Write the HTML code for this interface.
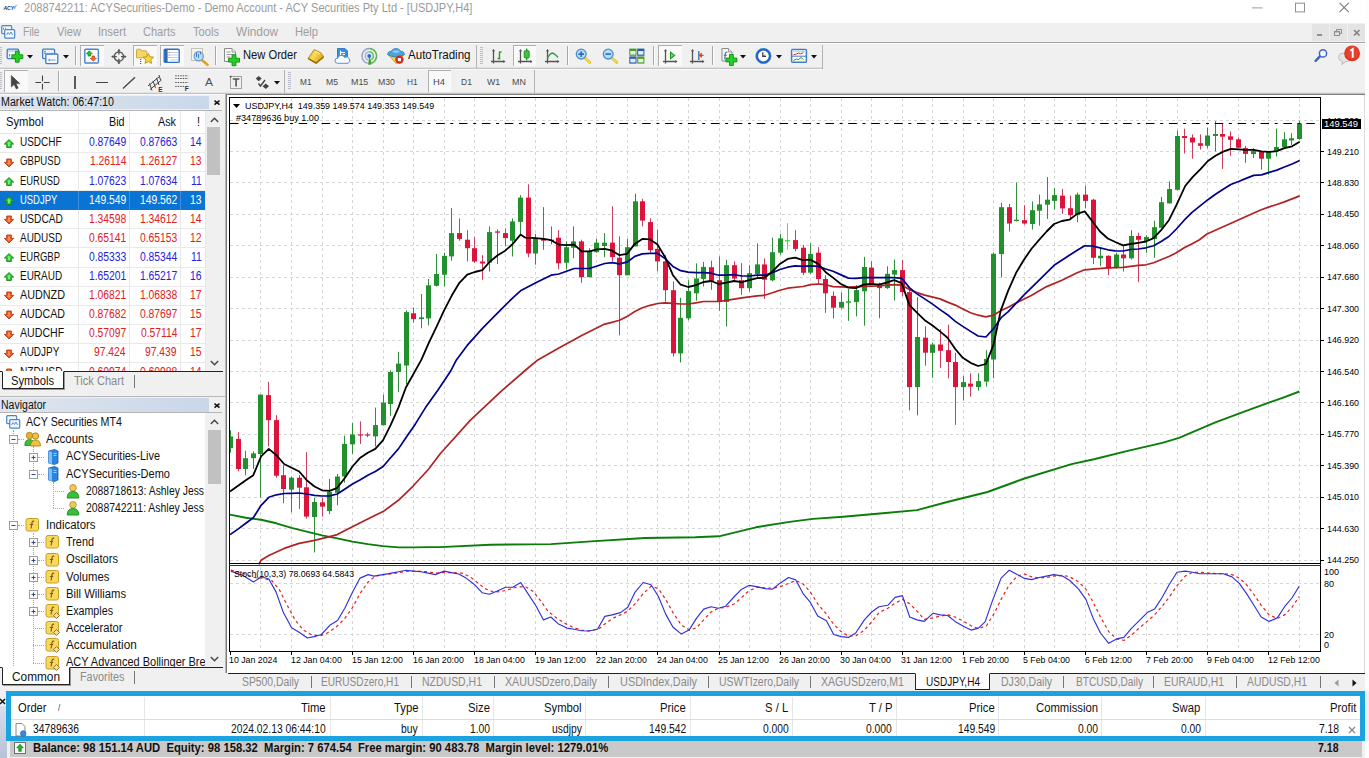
<!DOCTYPE html>
<html><head><meta charset="utf-8"><title>MT4</title>
<style>
html,body{margin:0;padding:0;}
body{width:1369px;height:758px;overflow:hidden;background:#f0f0f0;font-family:"Liberation Sans",sans-serif;position:relative;}
.t{position:absolute;white-space:pre;transform-origin:0 50%;}
.r{position:absolute;}
svg{position:absolute;overflow:visible;}
</style></head><body>
<div class="r" style="left:0px;top:0px;width:1369px;height:23px;background:#fff;"></div>
<span class="t" style="left:24.0px;top:0.8px;font-size:12.5px;line-height:15.0px;color:#9a9a9a;transform:scaleX(0.884);">2088742211: ACYSecurities-Demo - Demo Account - ACY Securities Pty Ltd - [USDJPY,H4]</span>
<svg style="left:1252px;top:0px" width="12" height="12"><path d="M0 7.900H10.500" stroke="#999" stroke-width="1"/></svg>
<svg style="left:1295px;top:0px" width="12" height="14"><rect x="0.500" y="3.200" width="9" height="8.700" stroke="#8f8f8f" stroke-width="1" fill="none"/></svg>
<svg style="left:1339px;top:0px" width="11" height="14"><path d="M0.500 2.900L9.800 12.200M9.800 2.900L0.500 12.200" stroke="#7c7c7c" stroke-width="1.100" fill="none"/></svg>
<div class="r" style="left:0px;top:23px;width:1369px;height:19px;background:#f0f0f0;"></div>
<span class="t" style="left:23.0px;top:24.5px;font-size:12.5px;line-height:15.0px;color:#9d9d9d;transform:scaleX(0.819);">File</span>
<span class="t" style="left:57.0px;top:24.5px;font-size:12.5px;line-height:15.0px;color:#9d9d9d;transform:scaleX(0.893);">View</span>
<span class="t" style="left:98.0px;top:24.5px;font-size:12.5px;line-height:15.0px;color:#9d9d9d;transform:scaleX(0.896);">Insert</span>
<span class="t" style="left:143.0px;top:24.5px;font-size:12.5px;line-height:15.0px;color:#9d9d9d;transform:scaleX(0.883);">Charts</span>
<span class="t" style="left:193.0px;top:24.5px;font-size:12.5px;line-height:15.0px;color:#9d9d9d;transform:scaleX(0.891);">Tools</span>
<span class="t" style="left:236.0px;top:24.5px;font-size:12.5px;line-height:15.0px;color:#9d9d9d;transform:scaleX(0.945);">Window</span>
<span class="t" style="left:295.0px;top:24.5px;font-size:12.5px;line-height:15.0px;color:#9d9d9d;transform:scaleX(0.895);">Help</span>
<div class="r" style="left:1312px;top:24px;width:17px;height:17px;background:#e4e4e4;"></div>
<div class="r" style="left:1330px;top:24px;width:17px;height:17px;background:#e4e4e4;"></div>
<div class="r" style="left:1348px;top:24px;width:17px;height:17px;background:#e4e4e4;"></div>
<div class="r" style="left:1317px;top:34px;width:5px;height:2px;background:#909090;"></div>
<svg style="left:1334px;top:29px" width="9" height="8"><path d="M2.5 2V0.5H7.5V4.5H6" stroke="#8c8c8c" stroke-width="1" fill="none"/><rect x="0.5" y="2.5" width="5" height="4" stroke="#8c8c8c" stroke-width="1" fill="none"/><path d="M0 2.700h6" stroke="#8c8c8c" stroke-width="1.400"/></svg>
<svg style="left:1353px;top:29px" width="8" height="8"><path d="M1 1L6.500 6.500M6.500 1L1 6.500" stroke="#808080" stroke-width="1.600" fill="none"/></svg>
<div class="r" style="left:0px;top:42px;width:1369px;height:1px;background:#a2a2a2;"></div>
<div class="r" style="left:0px;top:43px;width:1369px;height:1px;background:#fcfcfc;"></div>
<div class="r" style="left:0px;top:67px;width:822px;height:1px;background:#e2e2e2;"></div>
<div class="r" style="left:0px;top:68px;width:822px;height:1px;background:#c4c4c4;"></div>
<div class="r" style="left:0px;top:69px;width:822px;height:1px;background:#fafafa;"></div>
<div class="r" style="left:0px;top:92px;width:1369px;height:1px;background:#e4e4e4;"></div>
<div class="r" style="left:0px;top:93px;width:1369px;height:1px;background:#c2c2c2;"></div>
<div class="r" style="left:0px;top:94px;width:226px;height:1px;background:#f8f8f8;"></div>
<div class="r" style="left:0px;top:96px;width:209px;height:13px;background:linear-gradient(90deg,#dfe4ec,#c9d8ea);"></div>
<span class="t" style="left:1.0px;top:95.3px;font-size:12px;line-height:14.4px;color:#111;transform:scaleX(0.890);">Market Watch: 06:47:10</span>
<svg style="left:214px;top:100px" width="6" height="6"><path d="M0.500 0.700L5.500 4.700M5.500 0.700L0.500 4.700" stroke="#111" stroke-width="1.500" fill="none"/></svg>
<div class="r" style="left:0px;top:110px;width:223px;height:262px;background:#fff;"></div>
<div class="r" style="left:0px;top:110px;width:222px;height:1px;background:#b4b4b4;"></div>
<span class="t" style="left:6.0px;top:114.8px;font-size:12px;line-height:14.4px;color:#111;transform:scaleX(0.937);">Symbol</span>
<span class="t" style="left:108.9px;top:114.8px;font-size:12px;line-height:14.4px;color:#111;transform:scaleX(0.900);">Bid</span>
<span class="t" style="left:157.5px;top:114.8px;font-size:12px;line-height:14.4px;color:#111;transform:scaleX(0.900);">Ask</span>
<span class="t" style="left:197.0px;top:114.8px;font-size:12px;line-height:14.4px;color:#111;transform:scaleX(0.900);">!</span>
<div class="r" style="left:0px;top:133px;width:205px;height:1px;background:#e4e4e4;"></div>
<div class="r" style="left:78px;top:110px;width:1px;height:262px;background:#e8e8e8;"></div>
<div class="r" style="left:129px;top:110px;width:1px;height:262px;background:#e8e8e8;"></div>
<div class="r" style="left:180px;top:110px;width:1px;height:262px;background:#e8e8e8;"></div>
<div class="r" style="left:205px;top:110px;width:1px;height:262px;background:#e8e8e8;"></div>
<div class="r" style="left:0px;top:152px;width:205px;height:1px;background:#e9e9e9;"></div>
<svg style="left:4.2px;top:138.5px" width="11" height="10"><path d="M5 0.600L9.700 5.100H7.300V8.500H2.700V5.100H0.300Z" fill="#2cc42c" stroke="#1a8a1a" stroke-width="0.900" stroke-linejoin="round"/><path d="M5 2.500L7 4.600H6V7.300H4V4.600H3Z" fill="#7aea7a"/></svg>
<span class="t" style="left:19.8px;top:135.3px;font-size:12px;line-height:14.4px;color:#111;transform:scaleX(0.832);">USDCHF</span>
<span class="t" style="left:88.7px;top:135.3px;font-size:12px;line-height:14.4px;color:#2222dd;transform:scaleX(0.860);">0.87649</span>
<span class="t" style="left:139.7px;top:135.3px;font-size:12px;line-height:14.4px;color:#2222dd;transform:scaleX(0.860);">0.87663</span>
<span class="t" style="left:190.0px;top:135.3px;font-size:12px;line-height:14.4px;color:#2222dd;transform:scaleX(0.860);">14</span>
<div class="r" style="left:0px;top:171px;width:205px;height:1px;background:#e9e9e9;"></div>
<svg style="left:4.2px;top:157.6px" width="11" height="10"><path d="M5 8.900L9.700 4.400H7.300V1H2.700V4.400H0.300Z" fill="#ee5a22" stroke="#b83a10" stroke-width="0.900" stroke-linejoin="round"/><path d="M5 7L7 4.900H6V2.200H4V4.900H3Z" fill="#ff8a5a"/></svg>
<span class="t" style="left:19.8px;top:154.4px;font-size:12px;line-height:14.4px;color:#111;transform:scaleX(0.801);">GBPUSD</span>
<span class="t" style="left:89.5px;top:154.4px;font-size:12px;line-height:14.4px;color:#e02020;transform:scaleX(0.860);">1.26114</span>
<span class="t" style="left:139.7px;top:154.4px;font-size:12px;line-height:14.4px;color:#e02020;transform:scaleX(0.860);">1.26127</span>
<span class="t" style="left:190.0px;top:154.4px;font-size:12px;line-height:14.4px;color:#e02020;transform:scaleX(0.860);">13</span>
<div class="r" style="left:0px;top:190px;width:205px;height:1px;background:#e9e9e9;"></div>
<svg style="left:4.2px;top:176.7px" width="11" height="10"><path d="M5 0.600L9.700 5.100H7.300V8.500H2.700V5.100H0.300Z" fill="#2cc42c" stroke="#1a8a1a" stroke-width="0.900" stroke-linejoin="round"/><path d="M5 2.500L7 4.600H6V7.300H4V4.600H3Z" fill="#7aea7a"/></svg>
<span class="t" style="left:19.8px;top:173.5px;font-size:12px;line-height:14.4px;color:#111;transform:scaleX(0.785);">EURUSD</span>
<span class="t" style="left:88.7px;top:173.5px;font-size:12px;line-height:14.4px;color:#2222dd;transform:scaleX(0.860);">1.07623</span>
<span class="t" style="left:139.7px;top:173.5px;font-size:12px;line-height:14.4px;color:#2222dd;transform:scaleX(0.860);">1.07634</span>
<span class="t" style="left:190.8px;top:173.5px;font-size:12px;line-height:14.4px;color:#2222dd;transform:scaleX(0.860);">11</span>
<div class="r" style="left:0px;top:191px;width:205px;height:19px;background:#0a74d4;"></div>
<div class="r" style="left:78px;top:191px;width:1px;height:19px;background:#3c8fdd;"></div>
<div class="r" style="left:129px;top:191px;width:1px;height:19px;background:#3c8fdd;"></div>
<div class="r" style="left:180px;top:191px;width:1px;height:19px;background:#3c8fdd;"></div>
<svg style="left:4.2px;top:195.8px" width="11" height="10"><path d="M5 0.600L9.700 5.100H7.300V8.500H2.700V5.100H0.300Z" fill="#2cc42c" stroke="#1a8a1a" stroke-width="0.900" stroke-linejoin="round"/><path d="M5 2.500L7 4.600H6V7.300H4V4.600H3Z" fill="#7aea7a"/></svg>
<span class="t" style="left:19.8px;top:192.6px;font-size:12px;line-height:14.4px;color:#fff;transform:scaleX(0.786);">USDJPY</span>
<span class="t" style="left:88.7px;top:192.6px;font-size:12px;line-height:14.4px;color:#fff;transform:scaleX(0.860);">149.549</span>
<span class="t" style="left:139.7px;top:192.6px;font-size:12px;line-height:14.4px;color:#fff;transform:scaleX(0.860);">149.562</span>
<span class="t" style="left:190.0px;top:192.6px;font-size:12px;line-height:14.4px;color:#fff;transform:scaleX(0.860);">13</span>
<div class="r" style="left:0px;top:228px;width:205px;height:1px;background:#e9e9e9;"></div>
<svg style="left:4.2px;top:214.9px" width="11" height="10"><path d="M5 8.900L9.700 4.400H7.300V1H2.700V4.400H0.300Z" fill="#ee5a22" stroke="#b83a10" stroke-width="0.900" stroke-linejoin="round"/><path d="M5 7L7 4.900H6V2.200H4V4.900H3Z" fill="#ff8a5a"/></svg>
<span class="t" style="left:19.8px;top:211.7px;font-size:12px;line-height:14.4px;color:#111;transform:scaleX(0.847);">USDCAD</span>
<span class="t" style="left:88.7px;top:211.7px;font-size:12px;line-height:14.4px;color:#e02020;transform:scaleX(0.860);">1.34598</span>
<span class="t" style="left:139.7px;top:211.7px;font-size:12px;line-height:14.4px;color:#e02020;transform:scaleX(0.860);">1.34612</span>
<span class="t" style="left:190.0px;top:211.7px;font-size:12px;line-height:14.4px;color:#e02020;transform:scaleX(0.860);">14</span>
<div class="r" style="left:0px;top:247px;width:205px;height:1px;background:#e9e9e9;"></div>
<svg style="left:4.2px;top:234.0px" width="11" height="10"><path d="M5 8.900L9.700 4.400H7.300V1H2.700V4.400H0.300Z" fill="#ee5a22" stroke="#b83a10" stroke-width="0.900" stroke-linejoin="round"/><path d="M5 7L7 4.900H6V2.200H4V4.900H3Z" fill="#ff8a5a"/></svg>
<span class="t" style="left:19.8px;top:230.8px;font-size:12px;line-height:14.4px;color:#111;transform:scaleX(0.831);">AUDUSD</span>
<span class="t" style="left:88.7px;top:230.8px;font-size:12px;line-height:14.4px;color:#e02020;transform:scaleX(0.860);">0.65141</span>
<span class="t" style="left:139.7px;top:230.8px;font-size:12px;line-height:14.4px;color:#e02020;transform:scaleX(0.860);">0.65153</span>
<span class="t" style="left:190.0px;top:230.8px;font-size:12px;line-height:14.4px;color:#e02020;transform:scaleX(0.860);">12</span>
<div class="r" style="left:0px;top:267px;width:205px;height:1px;background:#e9e9e9;"></div>
<svg style="left:4.2px;top:253.1px" width="11" height="10"><path d="M5 0.600L9.700 5.100H7.300V8.500H2.700V5.100H0.300Z" fill="#2cc42c" stroke="#1a8a1a" stroke-width="0.900" stroke-linejoin="round"/><path d="M5 2.500L7 4.600H6V7.300H4V4.600H3Z" fill="#7aea7a"/></svg>
<span class="t" style="left:19.8px;top:249.9px;font-size:12px;line-height:14.4px;color:#111;transform:scaleX(0.789);">EURGBP</span>
<span class="t" style="left:88.7px;top:249.9px;font-size:12px;line-height:14.4px;color:#2222dd;transform:scaleX(0.860);">0.85333</span>
<span class="t" style="left:139.7px;top:249.9px;font-size:12px;line-height:14.4px;color:#2222dd;transform:scaleX(0.860);">0.85344</span>
<span class="t" style="left:190.8px;top:249.9px;font-size:12px;line-height:14.4px;color:#2222dd;transform:scaleX(0.860);">11</span>
<div class="r" style="left:0px;top:286px;width:205px;height:1px;background:#e9e9e9;"></div>
<svg style="left:4.2px;top:272.2px" width="11" height="10"><path d="M5 0.600L9.700 5.100H7.300V8.500H2.700V5.100H0.300Z" fill="#2cc42c" stroke="#1a8a1a" stroke-width="0.900" stroke-linejoin="round"/><path d="M5 2.500L7 4.600H6V7.300H4V4.600H3Z" fill="#7aea7a"/></svg>
<span class="t" style="left:19.8px;top:269.0px;font-size:12px;line-height:14.4px;color:#111;transform:scaleX(0.831);">EURAUD</span>
<span class="t" style="left:88.7px;top:269.0px;font-size:12px;line-height:14.4px;color:#2222dd;transform:scaleX(0.860);">1.65201</span>
<span class="t" style="left:139.7px;top:269.0px;font-size:12px;line-height:14.4px;color:#2222dd;transform:scaleX(0.860);">1.65217</span>
<span class="t" style="left:190.0px;top:269.0px;font-size:12px;line-height:14.4px;color:#2222dd;transform:scaleX(0.860);">16</span>
<div class="r" style="left:0px;top:305px;width:205px;height:1px;background:#e9e9e9;"></div>
<svg style="left:4.2px;top:291.3px" width="11" height="10"><path d="M5 8.900L9.700 4.400H7.300V1H2.700V4.400H0.300Z" fill="#ee5a22" stroke="#b83a10" stroke-width="0.900" stroke-linejoin="round"/><path d="M5 7L7 4.900H6V2.200H4V4.900H3Z" fill="#ff8a5a"/></svg>
<span class="t" style="left:19.8px;top:288.1px;font-size:12px;line-height:14.4px;color:#111;transform:scaleX(0.900);">AUDNZD</span>
<span class="t" style="left:88.7px;top:288.1px;font-size:12px;line-height:14.4px;color:#e02020;transform:scaleX(0.860);">1.06821</span>
<span class="t" style="left:139.7px;top:288.1px;font-size:12px;line-height:14.4px;color:#e02020;transform:scaleX(0.860);">1.06838</span>
<span class="t" style="left:190.0px;top:288.1px;font-size:12px;line-height:14.4px;color:#e02020;transform:scaleX(0.860);">17</span>
<div class="r" style="left:0px;top:324px;width:205px;height:1px;background:#e9e9e9;"></div>
<svg style="left:4.2px;top:310.4px" width="11" height="10"><path d="M5 8.900L9.700 4.400H7.300V1H2.700V4.400H0.300Z" fill="#ee5a22" stroke="#b83a10" stroke-width="0.900" stroke-linejoin="round"/><path d="M5 7L7 4.900H6V2.200H4V4.900H3Z" fill="#ff8a5a"/></svg>
<span class="t" style="left:19.8px;top:307.2px;font-size:12px;line-height:14.4px;color:#111;transform:scaleX(0.888);">AUDCAD</span>
<span class="t" style="left:88.7px;top:307.2px;font-size:12px;line-height:14.4px;color:#e02020;transform:scaleX(0.860);">0.87682</span>
<span class="t" style="left:139.7px;top:307.2px;font-size:12px;line-height:14.4px;color:#e02020;transform:scaleX(0.860);">0.87697</span>
<span class="t" style="left:190.0px;top:307.2px;font-size:12px;line-height:14.4px;color:#e02020;transform:scaleX(0.860);">15</span>
<div class="r" style="left:0px;top:343px;width:205px;height:1px;background:#e9e9e9;"></div>
<svg style="left:4.2px;top:329.5px" width="11" height="10"><path d="M5 8.900L9.700 4.400H7.300V1H2.700V4.400H0.300Z" fill="#ee5a22" stroke="#b83a10" stroke-width="0.900" stroke-linejoin="round"/><path d="M5 7L7 4.900H6V2.200H4V4.900H3Z" fill="#ff8a5a"/></svg>
<span class="t" style="left:19.8px;top:326.3px;font-size:12px;line-height:14.4px;color:#111;transform:scaleX(0.884);">AUDCHF</span>
<span class="t" style="left:88.7px;top:326.3px;font-size:12px;line-height:14.4px;color:#e02020;transform:scaleX(0.860);">0.57097</span>
<span class="t" style="left:140.5px;top:326.3px;font-size:12px;line-height:14.4px;color:#e02020;transform:scaleX(0.860);">0.57114</span>
<span class="t" style="left:190.0px;top:326.3px;font-size:12px;line-height:14.4px;color:#e02020;transform:scaleX(0.860);">17</span>
<div class="r" style="left:0px;top:362px;width:205px;height:1px;background:#e9e9e9;"></div>
<svg style="left:4.2px;top:348.6px" width="11" height="10"><path d="M5 8.900L9.700 4.400H7.300V1H2.700V4.400H0.300Z" fill="#ee5a22" stroke="#b83a10" stroke-width="0.900" stroke-linejoin="round"/><path d="M5 7L7 4.900H6V2.200H4V4.900H3Z" fill="#ff8a5a"/></svg>
<span class="t" style="left:19.8px;top:345.4px;font-size:12px;line-height:14.4px;color:#111;transform:scaleX(0.830);">AUDJPY</span>
<span class="t" style="left:94.4px;top:345.4px;font-size:12px;line-height:14.4px;color:#e02020;transform:scaleX(0.860);">97.424</span>
<span class="t" style="left:145.4px;top:345.4px;font-size:12px;line-height:14.4px;color:#e02020;transform:scaleX(0.860);">97.439</span>
<span class="t" style="left:190.0px;top:345.4px;font-size:12px;line-height:14.4px;color:#e02020;transform:scaleX(0.860);">15</span>
<div class="r" style="left:0px;top:381px;width:205px;height:1px;background:#e9e9e9;"></div>
<svg style="left:4.2px;top:367.7px" width="11" height="10"><path d="M5 8.900L9.700 4.400H7.300V1H2.700V4.400H0.300Z" fill="#ee5a22" stroke="#b83a10" stroke-width="0.900" stroke-linejoin="round"/><path d="M5 7L7 4.900H6V2.200H4V4.900H3Z" fill="#ff8a5a"/></svg>
<span class="t" style="left:19.8px;top:364.5px;font-size:12px;line-height:14.4px;color:#111;transform:scaleX(0.850);">NZDUSD</span>
<span class="t" style="left:88.7px;top:364.5px;font-size:12px;line-height:14.4px;color:#e02020;transform:scaleX(0.860);">0.60974</span>
<span class="t" style="left:139.7px;top:364.5px;font-size:12px;line-height:14.4px;color:#e02020;transform:scaleX(0.860);">0.60988</span>
<span class="t" style="left:190.0px;top:364.5px;font-size:12px;line-height:14.4px;color:#e02020;transform:scaleX(0.860);">14</span>
<div class="r" style="left:0px;top:371px;width:223px;height:25px;background:#f0f0f0;"></div>
<div class="r" style="left:206px;top:110px;width:17px;height:262px;background:#f0f0f0;"></div>
<div class="r" style="left:207px;top:127px;width:13px;height:48px;background:#c1c1c1;"></div>
<div class="r" style="left:0px;top:110px;width:222px;height:1px;background:#b4b4b4;"></div>
<svg style="left:210px;top:117px" width="9" height="6"><path d="M0.8 5L4.5 1.3L8.2 5" stroke="#444" stroke-width="1.4" fill="none"/></svg>
<svg style="left:210px;top:360px" width="9" height="6"><path d="M0.8 1L4.5 4.7L8.2 1" stroke="#444" stroke-width="1.4" fill="none"/></svg>
<div class="r" style="left:0px;top:371px;width:223px;height:1px;background:#222;"></div>
<div class="r" style="left:2px;top:371px;width:62px;height:18px;background:#fff;border:1px solid #222;border-top:1px solid #fff;box-sizing:border-box;box-shadow:1px 1px 0 #999;"></div>
<span class="t" style="left:11.0px;top:373.5px;font-size:12px;line-height:14.4px;color:#111;transform:scaleX(0.935);">Symbols</span>
<span class="t" style="left:74.0px;top:373.5px;font-size:12px;line-height:14.4px;color:#8a8a8a;transform:scaleX(0.922);">Tick Chart</span>
<div class="r" style="left:134px;top:375px;width:1px;height:13px;background:#777;"></div>
<div class="r" style="left:0px;top:396px;width:225px;height:1px;background:#b8b8b8;"></div>
<div class="r" style="left:0px;top:398px;width:209px;height:14px;background:linear-gradient(90deg,#e0e5ee,#c9d7e9);"></div>
<div class="r" style="left:0px;top:412px;width:222px;height:1px;background:#b4b4b4;"></div>
<span class="t" style="left:1.0px;top:397.8px;font-size:12px;line-height:14.4px;color:#111;transform:scaleX(0.876);">Navigator</span>
<svg style="left:214px;top:403px" width="6" height="6"><path d="M0.500 0.700L5.500 4.700M5.500 0.700L0.500 4.700" stroke="#111" stroke-width="1.500" fill="none"/></svg>
<div class="r" style="left:0px;top:413px;width:223px;height:256px;background:#fff;"></div>
<span class="t" style="left:26.3px;top:415.0px;font-size:12px;line-height:14.4px;color:#111;transform:scaleX(0.890);">ACY Securities MT4</span>
<span class="t" style="left:46.3px;top:432.2px;font-size:12px;line-height:14.4px;color:#111;transform:scaleX(0.962);">Accounts</span>
<span class="t" style="left:66.3px;top:449.3px;font-size:12px;line-height:14.4px;color:#111;transform:scaleX(0.909);">ACYSecurities-Live</span>
<span class="t" style="left:66.3px;top:466.5px;font-size:12px;line-height:14.4px;color:#111;transform:scaleX(0.917);">ACYSecurities-Demo</span>
<span class="t" style="left:86.3px;top:483.7px;font-size:12px;line-height:14.4px;color:#111;transform:scaleX(0.863);">2088718613: Ashley Jess</span>
<span class="t" style="left:86.3px;top:500.9px;font-size:12px;line-height:14.4px;color:#111;transform:scaleX(0.868);">2088742211: Ashley Jess</span>
<span class="t" style="left:46.3px;top:518.0px;font-size:12px;line-height:14.4px;color:#111;transform:scaleX(0.952);">Indicators</span>
<span class="t" style="left:66.3px;top:535.2px;font-size:12px;line-height:14.4px;color:#111;transform:scaleX(0.906);">Trend</span>
<span class="t" style="left:66.3px;top:552.4px;font-size:12px;line-height:14.4px;color:#111;transform:scaleX(0.928);">Oscillators</span>
<span class="t" style="left:66.3px;top:569.5px;font-size:12px;line-height:14.4px;color:#111;transform:scaleX(0.943);">Volumes</span>
<span class="t" style="left:66.3px;top:586.7px;font-size:12px;line-height:14.4px;color:#111;transform:scaleX(0.938);">Bill Williams</span>
<span class="t" style="left:66.3px;top:603.9px;font-size:12px;line-height:14.4px;color:#111;transform:scaleX(0.892);">Examples</span>
<span class="t" style="left:66.3px;top:621.0px;font-size:12px;line-height:14.4px;color:#111;transform:scaleX(0.931);">Accelerator</span>
<span class="t" style="left:66.3px;top:638.2px;font-size:12px;line-height:14.4px;color:#111;transform:scaleX(0.983);">Accumulation</span>
<span class="t" style="left:66.3px;top:655.4px;font-size:12px;line-height:14.4px;color:#111;transform:scaleX(0.915);">ACY Advanced Bollinger Bre</span>
<div class="r" style="left:13px;top:430px;width:1px;height:235.58000000000004px;background:transparent;border-left:1px dotted #a6a6a6;"></div>
<div class="r" style="left:18px;top:439px;width:6px;height:1px;background:transparent;border-top:1px dotted #a6a6a6;"></div>
<div class="r" style="left:18px;top:525px;width:6px;height:1px;background:transparent;border-top:1px dotted #a6a6a6;"></div>
<div class="r" style="left:33px;top:446px;width:1px;height:24px;background:transparent;border-left:1px dotted #a6a6a6;"></div>
<div class="r" style="left:38px;top:457px;width:6px;height:1px;background:transparent;border-top:1px dotted #a6a6a6;"></div>
<div class="r" style="left:38px;top:474px;width:6px;height:1px;background:transparent;border-top:1px dotted #a6a6a6;"></div>
<div class="r" style="left:53px;top:482px;width:1px;height:26px;background:transparent;border-left:1px dotted #a6a6a6;"></div>
<div class="r" style="left:53px;top:491px;width:11px;height:1px;background:transparent;border-top:1px dotted #a6a6a6;"></div>
<div class="r" style="left:53px;top:508px;width:11px;height:1px;background:transparent;border-top:1px dotted #a6a6a6;"></div>
<div class="r" style="left:33px;top:533px;width:1px;height:130px;background:transparent;border-left:1px dotted #a6a6a6;"></div>
<div class="r" style="left:38px;top:542px;width:6px;height:1px;background:transparent;border-top:1px dotted #a6a6a6;"></div>
<div class="r" style="left:38px;top:560px;width:6px;height:1px;background:transparent;border-top:1px dotted #a6a6a6;"></div>
<div class="r" style="left:38px;top:577px;width:6px;height:1px;background:transparent;border-top:1px dotted #a6a6a6;"></div>
<div class="r" style="left:38px;top:594px;width:6px;height:1px;background:transparent;border-top:1px dotted #a6a6a6;"></div>
<div class="r" style="left:38px;top:611px;width:6px;height:1px;background:transparent;border-top:1px dotted #a6a6a6;"></div>
<div class="r" style="left:33px;top:628px;width:11px;height:1px;background:transparent;border-top:1px dotted #a6a6a6;"></div>
<div class="r" style="left:33px;top:645px;width:11px;height:1px;background:transparent;border-top:1px dotted #a6a6a6;"></div>
<div class="r" style="left:33px;top:663px;width:11px;height:1px;background:transparent;border-top:1px dotted #a6a6a6;"></div>
<div class="r" style="left:0px;top:667px;width:223px;height:26px;background:#f0f0f0;"></div>
<div class="r" style="left:0px;top:667px;width:223px;height:1px;background:#222;"></div>
<div class="r" style="left:2px;top:667px;width:68px;height:18px;background:#fff;border:1px solid #222;border-top:1px solid #fff;box-sizing:border-box;box-shadow:1px 1px 0 #999;"></div>
<span class="t" style="left:12.0px;top:669.6px;font-size:12px;line-height:14.4px;color:#111;transform:scaleX(0.986);">Common</span>
<span class="t" style="left:79.5px;top:669.6px;font-size:12px;line-height:14.4px;color:#8a8a8a;transform:scaleX(0.902);">Favorites</span>
<div class="r" style="left:134px;top:671px;width:1px;height:13px;background:#777;"></div>
<div class="r" style="left:205px;top:413px;width:18px;height:254px;background:#f0f0f0;"></div>
<div class="r" style="left:208px;top:430px;width:13px;height:54px;background:#c1c1c1;"></div>
<svg style="left:210px;top:419px" width="9" height="6"><path d="M0.800 5L4.500 1.300L8.200 5" stroke="#444" stroke-width="1.400" fill="none"/></svg>
<svg style="left:210px;top:656px" width="9" height="6"><path d="M0.800 1L4.500 4.700L8.200 1" stroke="#444" stroke-width="1.400" fill="none"/></svg>
<div class="r" style="left:0px;top:706px;width:7px;height:52px;background:linear-gradient(180deg,#d8dfea,#b6c2d8);"></div>
<div class="r" style="left:9px;top:695px;width:1353px;height:43px;background:#fff;"></div>
<span class="t" style="left:17.5px;top:701.1px;font-size:12px;line-height:14.4px;color:#111;transform:scaleX(0.930);">Order</span>
<span class="t" style="left:300.9px;top:701.1px;font-size:12px;line-height:14.4px;color:#111;transform:scaleX(0.940);">Time</span>
<span class="t" style="left:394.0px;top:701.1px;font-size:12px;line-height:14.4px;color:#111;transform:scaleX(0.940);">Type</span>
<span class="t" style="left:467.6px;top:701.1px;font-size:12px;line-height:14.4px;color:#111;transform:scaleX(0.940);">Size</span>
<span class="t" style="left:543.9px;top:701.1px;font-size:12px;line-height:14.4px;color:#111;transform:scaleX(0.940);">Symbol</span>
<span class="t" style="left:659.8px;top:701.1px;font-size:12px;line-height:14.4px;color:#111;transform:scaleX(0.940);">Price</span>
<span class="t" style="left:765.3px;top:701.1px;font-size:12px;line-height:14.4px;color:#111;transform:scaleX(0.940);">S / L</span>
<span class="t" style="left:868.9px;top:701.1px;font-size:12px;line-height:14.4px;color:#111;transform:scaleX(0.940);">T / P</span>
<span class="t" style="left:968.8px;top:701.1px;font-size:12px;line-height:14.4px;color:#111;transform:scaleX(0.940);">Price</span>
<span class="t" style="left:1035.5px;top:701.1px;font-size:12px;line-height:14.4px;color:#111;transform:scaleX(0.940);">Commission</span>
<span class="t" style="left:1172.3px;top:701.1px;font-size:12px;line-height:14.4px;color:#111;transform:scaleX(0.940);">Swap</span>
<span class="t" style="left:1330.2px;top:701.1px;font-size:12px;line-height:14.4px;color:#111;transform:scaleX(0.940);">Profit</span>
<span class="t" style="left:57.5px;top:703.1px;font-size:9px;line-height:10.8px;color:#444;transform:scaleX(0.900);">/</span>
<div class="r" style="left:144px;top:697px;width:1px;height:40px;background:#e6e6e6;"></div>
<div class="r" style="left:330px;top:697px;width:1px;height:40px;background:#e6e6e6;"></div>
<div class="r" style="left:422px;top:697px;width:1px;height:40px;background:#e6e6e6;"></div>
<div class="r" style="left:493px;top:697px;width:1px;height:40px;background:#e6e6e6;"></div>
<div class="r" style="left:585px;top:697px;width:1px;height:40px;background:#e6e6e6;"></div>
<div class="r" style="left:690px;top:697px;width:1px;height:40px;background:#e6e6e6;"></div>
<div class="r" style="left:792px;top:697px;width:1px;height:40px;background:#e6e6e6;"></div>
<div class="r" style="left:896px;top:697px;width:1px;height:40px;background:#e6e6e6;"></div>
<div class="r" style="left:998px;top:697px;width:1px;height:40px;background:#e6e6e6;"></div>
<div class="r" style="left:1101px;top:697px;width:1px;height:40px;background:#e6e6e6;"></div>
<div class="r" style="left:1205px;top:697px;width:1px;height:40px;background:#e6e6e6;"></div>
<div class="r" style="left:9px;top:719px;width:1353px;height:1px;background:#dcdcdc;"></div>
<span class="t" style="left:32.7px;top:722.1px;font-size:12px;line-height:14.4px;color:#111;transform:scaleX(0.860);">34789636</span>
<span class="t" style="left:231.3px;top:722.1px;font-size:12px;line-height:14.4px;color:#111;transform:scaleX(0.860);">2024.02.13 06:44:10</span>
<span class="t" style="left:401.4px;top:722.1px;font-size:12px;line-height:14.4px;color:#111;transform:scaleX(0.860);">buy</span>
<span class="t" style="left:469.9px;top:722.1px;font-size:12px;line-height:14.4px;color:#111;transform:scaleX(0.860);">1.00</span>
<span class="t" style="left:552.2px;top:722.1px;font-size:12px;line-height:14.4px;color:#111;transform:scaleX(0.860);">usdjpy</span>
<span class="t" style="left:648.7px;top:722.1px;font-size:12px;line-height:14.4px;color:#111;transform:scaleX(0.860);">149.542</span>
<span class="t" style="left:763.2px;top:722.1px;font-size:12px;line-height:14.4px;color:#111;transform:scaleX(0.860);">0.000</span>
<span class="t" style="left:866.2px;top:722.1px;font-size:12px;line-height:14.4px;color:#111;transform:scaleX(0.860);">0.000</span>
<span class="t" style="left:957.7px;top:722.1px;font-size:12px;line-height:14.4px;color:#111;transform:scaleX(0.860);">149.549</span>
<span class="t" style="left:1077.9px;top:722.1px;font-size:12px;line-height:14.4px;color:#111;transform:scaleX(0.860);">0.00</span>
<span class="t" style="left:1180.9px;top:722.1px;font-size:12px;line-height:14.4px;color:#111;transform:scaleX(0.860);">0.00</span>
<span class="t" style="left:1318.9px;top:722.1px;font-size:12px;line-height:14.4px;color:#111;transform:scaleX(0.860);">7.18</span>
<svg style="left:1348px;top:726px" width="8" height="8"><path d="M1 1L7 7M7 1L1 7" stroke="#888" stroke-width="1.300" fill="none"/></svg>
<div class="r" style="left:10px;top:741px;width:1352px;height:16px;background:#c9c9c9;"></div>
<span class="t" style="left:32.7px;top:741.3px;font-size:12px;line-height:14.4px;color:#111;transform:scaleX(0.938);font-weight:bold;">Balance: 98 151.14 AUD  Equity: 98 158.32  Margin: 7 674.54  Free margin: 90 483.78  Margin level: 1279.01%</span>
<span class="t" style="left:1318.4px;top:741.3px;font-size:12px;line-height:14.4px;color:#111;transform:scaleX(0.880);font-weight:bold;">7.18</span>
<div class="r" style="left:6px;top:691px;width:1359px;height:50px;background:transparent;border:5px solid #1ba2e1;border-top-width:5.500px;box-sizing:border-box;"></div>
<svg style="left:0px;top:698px" width="6" height="7"><path d="M0 1L5 6M5 1L0 6" stroke="#111" stroke-width="1.500" fill="none"/></svg>
<div class="r" style="left:226px;top:94px;width:1139px;height:579px;background:#fff;"></div>
<div class="r" style="left:226px;top:94px;width:1139px;height:1px;background:#7e7e7e;"></div>
<div class="r" style="left:225px;top:94px;width:1px;height:597px;background:#b8b8b8;"></div>
<div class="r" style="left:226px;top:94px;width:1px;height:597px;background:#7a7a7a;"></div>
<div class="r" style="left:1364px;top:95px;width:1px;height:578px;background:#dcdcdc;"></div>
<svg style="left:0;top:0" width="1369" height="758" viewBox="0 0 1369 758">
<path d="M260.5 98V563 M260.5 567V651 M291.5 98V563 M291.5 567V651 M322.5 98V563 M322.5 567V651 M352.5 98V563 M352.5 567V651 M383.5 98V563 M383.5 567V651 M413.5 98V563 M413.5 567V651 M444.5 98V563 M444.5 567V651 M474.5 98V563 M474.5 567V651 M505.5 98V563 M505.5 567V651 M535.5 98V563 M535.5 567V651 M566.5 98V563 M566.5 567V651 M596.5 98V563 M596.5 567V651 M627.5 98V563 M627.5 567V651 M657.5 98V563 M657.5 567V651 M688.5 98V563 M688.5 567V651 M719.5 98V563 M719.5 567V651 M749.5 98V563 M749.5 567V651 M780.5 98V563 M780.5 567V651 M810.5 98V563 M810.5 567V651 M841.5 98V563 M841.5 567V651 M871.5 98V563 M871.5 567V651 M902.5 98V563 M902.5 567V651 M932.5 98V563 M932.5 567V651 M963.5 98V563 M963.5 567V651 M993.5 98V563 M993.5 567V651 M1024.5 98V563 M1024.5 567V651 M1054.5 98V563 M1054.5 567V651 M1085.5 98V563 M1085.5 567V651 M1116.5 98V563 M1116.5 567V651 M1146.5 98V563 M1146.5 567V651 M1177.5 98V563 M1177.5 567V651 M1207.5 98V563 M1207.5 567V651 M1238.5 98V563 M1238.5 567V651 M1268.5 98V563 M1268.5 567V651 M1299.5 98V563 M1299.5 567V651 M230 120.5H1320 M230 151.5H1320 M230 182.5H1320 M230 214.5H1320 M230 245.5H1320 M230 277.5H1320 M230 308.5H1320 M230 340.5H1320 M230 371.5H1320 M230 402.5H1320 M230 434.5H1320 M230 465.5H1320 M230 497.5H1320 M230 528.5H1320 M230 560.5H1320 M230 583.5H1320 M230 634.5H1320" stroke="#d6d6d6" stroke-width="1" stroke-dasharray="3 3" fill="none" shape-rendering="crispEdges"/>
<rect x="230" y="430.1" width="1" height="22.6" fill="#2f8f38"/>
<rect x="230" y="436.4" width="3" height="11.8" fill="#22902c"/>
<rect x="238" y="432.1" width="1" height="39.3" fill="#cc3c5c"/>
<rect x="236" y="438.9" width="5" height="30.1" fill="#dc143c"/>
<rect x="245" y="450.7" width="1" height="24.6" fill="#2f8f38"/>
<rect x="243" y="458.2" width="5" height="10.8" fill="#22902c"/>
<rect x="253" y="451.4" width="1" height="17.5" fill="#2f8f38"/>
<rect x="251" y="453.4" width="5" height="4.8" fill="#22902c"/>
<rect x="260" y="394.6" width="1" height="103.2" fill="#2f8f38"/>
<rect x="258" y="394.6" width="5" height="59.4" fill="#22902c"/>
<rect x="268" y="381.8" width="1" height="64.6" fill="#cc3c5c"/>
<rect x="266" y="395.1" width="5" height="25.1" fill="#dc143c"/>
<rect x="276" y="415.1" width="1" height="62.6" fill="#cc3c5c"/>
<rect x="274" y="420.1" width="5" height="55.6" fill="#dc143c"/>
<rect x="283" y="465.2" width="1" height="38.1" fill="#cc3c5c"/>
<rect x="281" y="475.2" width="5" height="13.8" fill="#dc143c"/>
<rect x="291" y="476.5" width="1" height="35.8" fill="#2f8f38"/>
<rect x="289" y="477.7" width="5" height="12.0" fill="#22902c"/>
<rect x="299" y="475.2" width="1" height="33.8" fill="#cc3c5c"/>
<rect x="297" y="477.7" width="5" height="10.0" fill="#dc143c"/>
<rect x="306" y="452.2" width="1" height="66.4" fill="#cc3c5c"/>
<rect x="304" y="487.3" width="5" height="29.3" fill="#dc143c"/>
<rect x="314" y="497.8" width="1" height="54.6" fill="#2f8f38"/>
<rect x="312" y="502.0" width="5" height="15.0" fill="#22902c"/>
<rect x="322" y="497.8" width="1" height="18.8" fill="#cc3c5c"/>
<rect x="320" y="502.3" width="5" height="4.3" fill="#dc143c"/>
<rect x="329" y="479.0" width="1" height="35.1" fill="#2f8f38"/>
<rect x="327" y="492.0" width="5" height="19.0" fill="#22902c"/>
<rect x="337" y="474.0" width="1" height="31.3" fill="#2f8f38"/>
<rect x="335" y="476.5" width="5" height="16.3" fill="#22902c"/>
<rect x="344" y="435.6" width="1" height="47.1" fill="#2f8f38"/>
<rect x="342" y="443.9" width="5" height="32.6" fill="#22902c"/>
<rect x="352" y="423.1" width="1" height="30.8" fill="#2f8f38"/>
<rect x="350" y="434.4" width="5" height="10.0" fill="#22902c"/>
<rect x="360" y="421.4" width="1" height="22.6" fill="#cc3c5c"/>
<rect x="358" y="434.4" width="5" height="1.2" fill="#dc143c"/>
<rect x="367" y="432.6" width="1" height="4.5" fill="#cc3c5c"/>
<rect x="365" y="434.4" width="5" height="1.2" fill="#dc143c"/>
<rect x="375" y="407.6" width="1" height="38.8" fill="#2f8f38"/>
<rect x="373" y="425.1" width="5" height="11.3" fill="#22902c"/>
<rect x="383" y="394.6" width="1" height="31.1" fill="#2f8f38"/>
<rect x="381" y="402.6" width="5" height="22.6" fill="#22902c"/>
<rect x="390" y="370.3" width="1" height="45.4" fill="#2f8f38"/>
<rect x="388" y="372.0" width="5" height="32.0" fill="#22902c"/>
<rect x="398" y="351.8" width="1" height="40.4" fill="#2f8f38"/>
<rect x="396" y="363.6" width="5" height="8.4" fill="#22902c"/>
<rect x="406" y="310.3" width="1" height="73.9" fill="#2f8f38"/>
<rect x="404" y="312.1" width="5" height="53.4" fill="#22902c"/>
<rect x="413" y="307.3" width="1" height="15.5" fill="#cc3c5c"/>
<rect x="411" y="313.3" width="5" height="5.8" fill="#dc143c"/>
<rect x="421" y="294.0" width="1" height="34.3" fill="#2f8f38"/>
<rect x="419" y="317.3" width="5" height="1.8" fill="#22902c"/>
<rect x="428" y="279.0" width="1" height="46.4" fill="#2f8f38"/>
<rect x="426" y="285.3" width="5" height="33.1" fill="#22902c"/>
<rect x="436" y="253.9" width="1" height="32.6" fill="#2f8f38"/>
<rect x="434" y="274.0" width="5" height="11.8" fill="#22902c"/>
<rect x="444" y="252.7" width="1" height="33.8" fill="#2f8f38"/>
<rect x="442" y="255.9" width="5" height="18.8" fill="#22902c"/>
<rect x="451" y="208.1" width="1" height="52.6" fill="#2f8f38"/>
<rect x="449" y="233.1" width="5" height="23.3" fill="#22902c"/>
<rect x="459" y="218.4" width="1" height="22.3" fill="#cc3c5c"/>
<rect x="457" y="233.1" width="5" height="5.8" fill="#dc143c"/>
<rect x="467" y="230.1" width="1" height="31.3" fill="#cc3c5c"/>
<rect x="465" y="239.7" width="5" height="8.5" fill="#dc143c"/>
<rect x="474" y="237.2" width="1" height="25.6" fill="#cc3c5c"/>
<rect x="472" y="248.2" width="5" height="13.3" fill="#dc143c"/>
<rect x="482" y="255.2" width="1" height="24.6" fill="#cc3c5c"/>
<rect x="480" y="261.5" width="5" height="2.0" fill="#dc143c"/>
<rect x="489" y="226.4" width="1" height="45.1" fill="#2f8f38"/>
<rect x="487" y="232.1" width="5" height="30.6" fill="#22902c"/>
<rect x="497" y="229.4" width="1" height="34.6" fill="#cc3c5c"/>
<rect x="495" y="231.4" width="5" height="1.3" fill="#dc143c"/>
<rect x="505" y="228.4" width="1" height="18.0" fill="#cc3c5c"/>
<rect x="503" y="233.1" width="5" height="5.0" fill="#dc143c"/>
<rect x="512" y="218.4" width="1" height="38.1" fill="#2f8f38"/>
<rect x="510" y="221.4" width="5" height="19.3" fill="#22902c"/>
<rect x="520" y="195.1" width="1" height="40.6" fill="#2f8f38"/>
<rect x="518" y="197.6" width="5" height="24.3" fill="#22902c"/>
<rect x="528" y="184.3" width="1" height="72.9" fill="#cc3c5c"/>
<rect x="526" y="197.6" width="5" height="55.9" fill="#dc143c"/>
<rect x="535" y="233.9" width="1" height="30.8" fill="#2f8f38"/>
<rect x="533" y="238.2" width="5" height="15.3" fill="#22902c"/>
<rect x="543" y="207.1" width="1" height="42.6" fill="#cc3c5c"/>
<rect x="541" y="238.9" width="5" height="1.8" fill="#dc143c"/>
<rect x="551" y="226.4" width="1" height="18.0" fill="#cc3c5c"/>
<rect x="549" y="239.7" width="5" height="1.3" fill="#dc143c"/>
<rect x="558" y="230.1" width="1" height="39.3" fill="#cc3c5c"/>
<rect x="556" y="237.7" width="5" height="25.6" fill="#dc143c"/>
<rect x="566" y="241.4" width="1" height="28.1" fill="#2f8f38"/>
<rect x="564" y="247.2" width="5" height="15.5" fill="#22902c"/>
<rect x="573" y="226.4" width="1" height="31.8" fill="#2f8f38"/>
<rect x="571" y="241.4" width="5" height="6.3" fill="#22902c"/>
<rect x="581" y="239.7" width="1" height="43.1" fill="#cc3c5c"/>
<rect x="579" y="241.4" width="5" height="35.8" fill="#dc143c"/>
<rect x="589" y="248.2" width="1" height="29.1" fill="#2f8f38"/>
<rect x="587" y="251.4" width="5" height="25.8" fill="#22902c"/>
<rect x="596" y="238.9" width="1" height="13.8" fill="#2f8f38"/>
<rect x="594" y="242.7" width="5" height="9.5" fill="#22902c"/>
<rect x="604" y="233.1" width="1" height="24.1" fill="#2f8f38"/>
<rect x="602" y="242.7" width="5" height="3.3" fill="#22902c"/>
<rect x="612" y="206.3" width="1" height="55.1" fill="#cc3c5c"/>
<rect x="610" y="242.6" width="5" height="14.5" fill="#dc143c"/>
<rect x="619" y="236.4" width="1" height="99.0" fill="#cc3c5c"/>
<rect x="617" y="257.7" width="5" height="17.5" fill="#dc143c"/>
<rect x="627" y="238.9" width="1" height="36.3" fill="#2f8f38"/>
<rect x="625" y="247.2" width="5" height="28.1" fill="#22902c"/>
<rect x="635" y="193.8" width="1" height="52.6" fill="#2f8f38"/>
<rect x="633" y="201.3" width="5" height="45.1" fill="#22902c"/>
<rect x="642" y="198.8" width="1" height="27.6" fill="#cc3c5c"/>
<rect x="640" y="201.3" width="5" height="19.3" fill="#dc143c"/>
<rect x="650" y="218.3" width="1" height="34.3" fill="#cc3c5c"/>
<rect x="648" y="222.1" width="5" height="28.1" fill="#dc143c"/>
<rect x="657" y="229.6" width="1" height="41.8" fill="#cc3c5c"/>
<rect x="655" y="248.9" width="5" height="12.5" fill="#dc143c"/>
<rect x="665" y="255.2" width="1" height="46.4" fill="#cc3c5c"/>
<rect x="663" y="261.4" width="5" height="28.8" fill="#dc143c"/>
<rect x="673" y="281.5" width="1" height="75.2" fill="#cc3c5c"/>
<rect x="671" y="290.2" width="5" height="63.1" fill="#dc143c"/>
<rect x="680" y="297.8" width="1" height="64.6" fill="#2f8f38"/>
<rect x="678" y="317.8" width="5" height="35.6" fill="#22902c"/>
<rect x="688" y="280.2" width="1" height="40.1" fill="#2f8f38"/>
<rect x="686" y="291.0" width="5" height="27.3" fill="#22902c"/>
<rect x="696" y="263.4" width="1" height="37.3" fill="#2f8f38"/>
<rect x="694" y="278.5" width="5" height="14.8" fill="#22902c"/>
<rect x="703" y="261.9" width="1" height="24.6" fill="#2f8f38"/>
<rect x="701" y="266.9" width="5" height="12.0" fill="#22902c"/>
<rect x="711" y="260.7" width="1" height="29.1" fill="#cc3c5c"/>
<rect x="709" y="267.2" width="5" height="14.3" fill="#dc143c"/>
<rect x="719" y="256.4" width="1" height="54.4" fill="#cc3c5c"/>
<rect x="717" y="280.2" width="5" height="21.3" fill="#dc143c"/>
<rect x="726" y="259.7" width="1" height="66.9" fill="#2f8f38"/>
<rect x="724" y="265.2" width="5" height="36.8" fill="#22902c"/>
<rect x="734" y="261.4" width="1" height="18.8" fill="#cc3c5c"/>
<rect x="732" y="265.2" width="5" height="13.3" fill="#dc143c"/>
<rect x="741" y="263.2" width="1" height="31.6" fill="#cc3c5c"/>
<rect x="739" y="280.2" width="5" height="8.0" fill="#dc143c"/>
<rect x="749" y="265.2" width="1" height="26.3" fill="#2f8f38"/>
<rect x="747" y="273.2" width="5" height="15.0" fill="#22902c"/>
<rect x="757" y="243.4" width="1" height="35.6" fill="#2f8f38"/>
<rect x="755" y="264.4" width="5" height="9.5" fill="#22902c"/>
<rect x="764" y="258.4" width="1" height="40.6" fill="#cc3c5c"/>
<rect x="762" y="264.4" width="5" height="15.3" fill="#dc143c"/>
<rect x="772" y="237.6" width="1" height="43.8" fill="#2f8f38"/>
<rect x="770" y="252.2" width="5" height="28.1" fill="#22902c"/>
<rect x="780" y="233.9" width="1" height="20.8" fill="#2f8f38"/>
<rect x="778" y="238.4" width="5" height="14.3" fill="#22902c"/>
<rect x="787" y="223.3" width="1" height="26.3" fill="#50e050"/>
<rect x="785" y="240.1" width="5" height="1.2" fill="#32e032"/>
<rect x="795" y="230.1" width="1" height="21.3" fill="#cc3c5c"/>
<rect x="793" y="240.1" width="5" height="8.8" fill="#dc143c"/>
<rect x="803" y="245.1" width="1" height="30.1" fill="#cc3c5c"/>
<rect x="801" y="247.7" width="5" height="25.1" fill="#dc143c"/>
<rect x="810" y="243.1" width="1" height="30.8" fill="#2f8f38"/>
<rect x="808" y="253.9" width="5" height="18.8" fill="#22902c"/>
<rect x="818" y="247.2" width="1" height="36.8" fill="#cc3c5c"/>
<rect x="816" y="252.7" width="5" height="26.3" fill="#dc143c"/>
<rect x="825" y="275.2" width="1" height="37.6" fill="#cc3c5c"/>
<rect x="823" y="279.0" width="5" height="14.3" fill="#dc143c"/>
<rect x="833" y="291.4" width="1" height="27.1" fill="#cc3c5c"/>
<rect x="831" y="295.9" width="5" height="11.8" fill="#dc143c"/>
<rect x="841" y="292.6" width="1" height="16.3" fill="#2f8f38"/>
<rect x="839" y="301.9" width="5" height="5.8" fill="#22902c"/>
<rect x="848" y="288.8" width="1" height="32.1" fill="#2f8f38"/>
<rect x="846" y="301.4" width="5" height="1.3" fill="#22902c"/>
<rect x="856" y="285.1" width="1" height="31.3" fill="#2f8f38"/>
<rect x="854" y="290.1" width="5" height="12.0" fill="#22902c"/>
<rect x="864" y="256.8" width="1" height="68.9" fill="#2f8f38"/>
<rect x="862" y="267.0" width="5" height="24.3" fill="#22902c"/>
<rect x="871" y="261.3" width="1" height="23.8" fill="#cc3c5c"/>
<rect x="869" y="267.6" width="5" height="16.3" fill="#dc143c"/>
<rect x="879" y="282.6" width="1" height="35.6" fill="#cc3c5c"/>
<rect x="877" y="283.8" width="5" height="4.3" fill="#dc143c"/>
<rect x="887" y="266.3" width="1" height="22.6" fill="#2f8f38"/>
<rect x="885" y="273.8" width="5" height="14.3" fill="#22902c"/>
<rect x="894" y="259.5" width="1" height="41.1" fill="#2f8f38"/>
<rect x="892" y="270.1" width="5" height="4.5" fill="#22902c"/>
<rect x="902" y="260.0" width="1" height="36.3" fill="#cc3c5c"/>
<rect x="900" y="270.1" width="5" height="22.0" fill="#dc143c"/>
<rect x="909" y="288.8" width="1" height="121.5" fill="#cc3c5c"/>
<rect x="907" y="292.1" width="5" height="95.0" fill="#dc143c"/>
<rect x="917" y="297.1" width="1" height="118.3" fill="#2f8f38"/>
<rect x="915" y="337.0" width="5" height="50.1" fill="#22902c"/>
<rect x="925" y="326.4" width="1" height="39.3" fill="#cc3c5c"/>
<rect x="923" y="337.7" width="5" height="15.0" fill="#dc143c"/>
<rect x="932" y="342.7" width="1" height="35.1" fill="#2f8f38"/>
<rect x="930" y="344.5" width="5" height="8.3" fill="#22902c"/>
<rect x="940" y="328.9" width="1" height="38.8" fill="#cc3c5c"/>
<rect x="938" y="344.5" width="5" height="6.3" fill="#dc143c"/>
<rect x="948" y="324.7" width="1" height="53.6" fill="#cc3c5c"/>
<rect x="946" y="350.2" width="5" height="11.8" fill="#dc143c"/>
<rect x="955" y="352.7" width="1" height="72.2" fill="#cc3c5c"/>
<rect x="953" y="362.0" width="5" height="25.1" fill="#dc143c"/>
<rect x="963" y="376.0" width="1" height="24.3" fill="#2f8f38"/>
<rect x="961" y="382.1" width="5" height="5.0" fill="#22902c"/>
<rect x="970" y="373.3" width="1" height="23.3" fill="#cc3c5c"/>
<rect x="968" y="383.6" width="5" height="3.0" fill="#dc143c"/>
<rect x="978" y="373.3" width="1" height="17.5" fill="#2f8f38"/>
<rect x="976" y="381.1" width="5" height="6.0" fill="#22902c"/>
<rect x="986" y="350.2" width="1" height="36.3" fill="#2f8f38"/>
<rect x="984" y="359.0" width="5" height="22.6" fill="#22902c"/>
<rect x="993" y="252.5" width="1" height="125.8" fill="#2f8f38"/>
<rect x="991" y="253.8" width="5" height="105.7" fill="#22902c"/>
<rect x="1001" y="202.7" width="1" height="74.7" fill="#2f8f38"/>
<rect x="999" y="207.2" width="5" height="46.9" fill="#22902c"/>
<rect x="1009" y="203.9" width="1" height="27.6" fill="#cc3c5c"/>
<rect x="1007" y="207.2" width="5" height="16.3" fill="#dc143c"/>
<rect x="1016" y="182.6" width="1" height="38.8" fill="#2f8f38"/>
<rect x="1014" y="219.7" width="5" height="1.3" fill="#22902c"/>
<rect x="1024" y="205.2" width="1" height="19.5" fill="#cc3c5c"/>
<rect x="1022" y="220.2" width="5" height="3.3" fill="#dc143c"/>
<rect x="1032" y="201.4" width="1" height="28.1" fill="#2f8f38"/>
<rect x="1030" y="210.2" width="5" height="13.8" fill="#22902c"/>
<rect x="1039" y="194.6" width="1" height="31.1" fill="#2f8f38"/>
<rect x="1037" y="204.4" width="5" height="6.3" fill="#22902c"/>
<rect x="1047" y="177.1" width="1" height="41.8" fill="#2f8f38"/>
<rect x="1045" y="199.7" width="5" height="5.0" fill="#22902c"/>
<rect x="1054" y="188.1" width="1" height="21.5" fill="#2f8f38"/>
<rect x="1052" y="195.1" width="5" height="5.8" fill="#22902c"/>
<rect x="1062" y="188.9" width="1" height="25.1" fill="#cc3c5c"/>
<rect x="1060" y="195.6" width="5" height="12.8" fill="#dc143c"/>
<rect x="1070" y="195.6" width="1" height="24.6" fill="#cc3c5c"/>
<rect x="1068" y="208.2" width="5" height="7.0" fill="#dc143c"/>
<rect x="1077" y="192.6" width="1" height="29.6" fill="#2f8f38"/>
<rect x="1075" y="194.6" width="5" height="20.5" fill="#22902c"/>
<rect x="1085" y="185.6" width="1" height="22.6" fill="#cc3c5c"/>
<rect x="1083" y="194.6" width="5" height="6.3" fill="#dc143c"/>
<rect x="1093" y="198.9" width="1" height="65.1" fill="#cc3c5c"/>
<rect x="1091" y="199.7" width="5" height="58.1" fill="#dc143c"/>
<rect x="1100" y="247.8" width="1" height="18.3" fill="#2f8f38"/>
<rect x="1098" y="255.8" width="5" height="2.5" fill="#22902c"/>
<rect x="1108" y="255.3" width="1" height="20.0" fill="#cc3c5c"/>
<rect x="1106" y="255.8" width="5" height="12.8" fill="#dc143c"/>
<rect x="1116" y="252.8" width="1" height="15.8" fill="#2f8f38"/>
<rect x="1114" y="254.5" width="5" height="13.3" fill="#22902c"/>
<rect x="1123" y="245.3" width="1" height="26.3" fill="#cc3c5c"/>
<rect x="1121" y="254.5" width="5" height="3.8" fill="#dc143c"/>
<rect x="1131" y="230.2" width="1" height="29.3" fill="#2f8f38"/>
<rect x="1129" y="236.0" width="5" height="22.3" fill="#22902c"/>
<rect x="1138" y="232.7" width="1" height="49.4" fill="#cc3c5c"/>
<rect x="1136" y="236.0" width="5" height="3.8" fill="#dc143c"/>
<rect x="1146" y="235.2" width="1" height="17.5" fill="#2f8f38"/>
<rect x="1144" y="237.0" width="5" height="3.8" fill="#22902c"/>
<rect x="1154" y="220.7" width="1" height="37.1" fill="#2f8f38"/>
<rect x="1152" y="227.2" width="5" height="11.8" fill="#22902c"/>
<rect x="1161" y="196.9" width="1" height="31.3" fill="#2f8f38"/>
<rect x="1159" y="202.2" width="5" height="25.6" fill="#22902c"/>
<rect x="1169" y="181.5" width="1" height="22.0" fill="#2f8f38"/>
<rect x="1167" y="189.0" width="5" height="14.4" fill="#22902c"/>
<rect x="1177" y="130.6" width="1" height="59.9" fill="#2f8f38"/>
<rect x="1175" y="136.0" width="5" height="53.8" fill="#22902c"/>
<rect x="1184" y="128.7" width="1" height="24.7" fill="#cc3c5c"/>
<rect x="1182" y="136.0" width="5" height="2.0" fill="#dc143c"/>
<rect x="1192" y="134.4" width="1" height="24.3" fill="#cc3c5c"/>
<rect x="1190" y="137.5" width="5" height="5.0" fill="#dc143c"/>
<rect x="1200" y="134.4" width="1" height="15.2" fill="#cc3c5c"/>
<rect x="1198" y="143.2" width="5" height="2.6" fill="#dc143c"/>
<rect x="1207" y="127.6" width="1" height="20.8" fill="#2f8f38"/>
<rect x="1205" y="135.5" width="5" height="10.3" fill="#22902c"/>
<rect x="1215" y="121.2" width="1" height="30.2" fill="#2f8f38"/>
<rect x="1213" y="134.0" width="5" height="2.0" fill="#22902c"/>
<rect x="1222" y="123.4" width="1" height="45.5" fill="#cc3c5c"/>
<rect x="1220" y="134.0" width="5" height="2.7" fill="#dc143c"/>
<rect x="1230" y="131.4" width="1" height="24.3" fill="#cc3c5c"/>
<rect x="1228" y="136.3" width="5" height="3.5" fill="#dc143c"/>
<rect x="1238" y="137.5" width="1" height="10.6" fill="#cc3c5c"/>
<rect x="1236" y="139.3" width="5" height="8.5" fill="#dc143c"/>
<rect x="1245" y="145.8" width="1" height="17.0" fill="#cc3c5c"/>
<rect x="1243" y="148.1" width="5" height="5.8" fill="#dc143c"/>
<rect x="1253" y="148.1" width="1" height="9.9" fill="#2f8f38"/>
<rect x="1251" y="151.1" width="5" height="3.0" fill="#22902c"/>
<rect x="1261" y="151.1" width="1" height="18.5" fill="#cc3c5c"/>
<rect x="1259" y="151.9" width="5" height="6.8" fill="#dc143c"/>
<rect x="1268" y="151.1" width="1" height="23.5" fill="#2f8f38"/>
<rect x="1266" y="151.4" width="5" height="7.3" fill="#22902c"/>
<rect x="1276" y="128.7" width="1" height="27.8" fill="#2f8f38"/>
<rect x="1274" y="147.0" width="5" height="3.8" fill="#22902c"/>
<rect x="1284" y="132.2" width="1" height="15.9" fill="#2f8f38"/>
<rect x="1282" y="139.3" width="5" height="8.0" fill="#22902c"/>
<rect x="1291" y="133.2" width="1" height="11.8" fill="#2f8f38"/>
<rect x="1289" y="138.2" width="5" height="2.3" fill="#22902c"/>
<rect x="1299" y="120.8" width="1" height="19.0" fill="#2f8f38"/>
<rect x="1297" y="123.4" width="5" height="15.6" fill="#22902c"/>
<path d="M230.0 514.6 L245.8 517.8 L261.1 519.8 L276.4 523.3 L291.6 527.9 L306.7 531.6 L322.0 535.4 L337.3 538.4 L352.5 541.6 L367.8 544.1 L383.1 546.1 L398.4 547.4 L413.4 547.4 L428.7 547.1 L440.0 547.1 L490.4 544.7 L550.9 544.1 L591.2 541.4 L645.0 538.0 L695.4 537.3 L718.9 536.3 L755.9 527.3 L789.5 521.9 L813.0 518.9 L843.2 516.8 L880.0 513.5 L917.0 510.1 L947.2 502.0 L987.5 492.0 L1024.5 478.5 L1071.5 464.1 L1095.0 459.0 L1128.7 450.6 L1162.3 442.9 L1179.0 437.9 L1216.0 422.1 L1249.6 409.6 L1283.2 397.6 L1299.4 391.5" stroke="#0a7d0a" stroke-width="1.9" fill="none" stroke-linejoin="round" />
<path d="M258.8 564.2 L261.3 559.9 L268.8 555.4 L284.1 548.4 L299.2 543.4 L314.5 540.4 L329.7 536.6 L337.3 534.6 L345.0 530.4 L360.3 522.8 L375.3 515.3 L383.1 511.6 L398.4 500.3 L413.4 485.8 L428.7 469.0 L440.0 454.0 L470.2 420.4 L500.5 391.8 L525.7 370.0 L537.8 359.9 L558.9 347.9 L581.7 335.4 L604.7 324.1 L610.0 322.8 L619.5 320.3 L627.0 316.6 L634.8 311.5 L642.3 307.8 L650.1 305.3 L657.6 303.5 L665.4 302.8 L672.9 303.3 L680.7 304.0 L688.2 304.0 L695.9 302.8 L703.5 301.5 L718.7 301.5 L726.5 300.3 L741.8 297.8 L757.1 295.8 L764.6 295.3 L772.4 292.8 L779.9 290.2 L787.6 288.2 L802.9 286.5 L810.5 284.7 L818.2 284.0 L825.7 284.7 L833.0 286.6 L848.3 287.1 L863.6 286.3 L878.9 285.8 L894.1 284.6 L901.7 285.1 L909.4 289.6 L916.9 292.6 L924.7 295.1 L940.0 298.9 L947.5 302.1 L955.3 305.1 L962.8 308.9 L970.6 312.7 L978.1 315.2 L985.9 316.9 L993.4 315.2 L1001.1 310.6 L1008.7 307.1 L1016.1 302.9 L1031.3 295.4 L1046.6 286.6 L1061.9 280.3 L1077.2 272.8 L1084.7 269.8 L1092.5 269.1 L1107.8 267.8 L1123.0 267.3 L1138.3 265.3 L1145.9 264.8 L1153.6 262.8 L1168.9 256.5 L1176.4 252.8 L1184.2 247.8 L1191.7 244.0 L1199.5 239.7 L1207.0 234.0 L1260.6 210.0 L1269.2 206.9 L1276.8 204.5 L1284.4 201.9 L1292.1 198.9 L1299.7 195.9" stroke="#b22222" stroke-width="1.7" fill="none" stroke-linejoin="round" />
<path d="M230.0 534.6 L238.0 529.1 L245.8 523.3 L253.3 517.8 L261.1 505.3 L268.8 497.3 L276.4 494.8 L284.1 493.5 L291.6 493.3 L299.2 493.0 L306.7 494.0 L314.5 495.3 L322.0 496.0 L329.7 495.8 L337.3 494.0 L345.0 489.0 L352.5 484.0 L360.3 479.7 L367.8 475.2 L375.3 471.5 L383.1 466.5 L390.6 457.7 L398.4 448.9 L405.9 437.7 L415.4 423.9 L425.5 407.6 L438.0 390.0 L450.5 371.3 L456.4 359.9 L467.2 345.4 L482.4 328.4 L497.7 312.8 L512.8 297.8 L520.5 290.8 L535.8 282.8 L551.1 275.2 L558.9 274.0 L574.2 268.5 L589.4 268.5 L604.7 263.5 L612.2 262.7 L619.5 263.9 L627.0 262.2 L634.8 256.4 L642.3 253.9 L650.1 253.4 L657.6 253.4 L665.4 258.9 L672.9 266.4 L680.7 270.7 L688.2 272.2 L695.9 272.7 L703.5 272.7 L711.2 273.2 L718.7 275.2 L726.5 275.2 L734.0 274.7 L741.8 276.0 L749.3 276.0 L757.1 275.2 L764.6 275.2 L772.4 272.7 L779.9 269.5 L787.6 267.2 L795.2 265.9 L802.9 266.4 L810.5 265.9 L818.2 266.4 L825.7 269.0 L833.0 271.3 L840.5 274.6 L848.3 278.1 L855.8 278.3 L863.6 277.6 L871.1 277.6 L878.9 277.6 L886.4 277.6 L894.1 277.6 L901.7 278.3 L909.4 287.6 L916.9 293.9 L924.7 298.9 L932.2 303.9 L940.0 309.6 L947.5 314.7 L955.3 321.4 L962.8 326.4 L970.6 331.4 L978.1 336.0 L985.9 337.0 L993.4 328.9 L1001.1 317.7 L1008.3 311.7 L1023.6 295.4 L1038.9 280.3 L1054.1 265.3 L1069.4 255.3 L1077.2 250.3 L1084.7 245.8 L1092.5 246.0 L1100.0 247.8 L1107.8 249.8 L1115.3 250.8 L1123.0 251.0 L1130.6 249.5 L1138.3 249.0 L1145.9 247.8 L1153.6 245.8 L1161.1 241.5 L1168.9 236.5 L1176.4 229.0 L1184.2 220.2 L1191.7 212.7 L1207.9 199.7 L1215.5 194.3 L1223.2 189.3 L1230.8 184.5 L1238.6 181.5 L1246.1 178.4 L1253.7 175.4 L1261.5 174.9 L1269.2 172.4 L1276.8 170.1 L1284.4 167.0 L1292.1 164.0 L1299.7 160.5" stroke="#00008b" stroke-width="1.7" fill="none" stroke-linejoin="round" />
<path d="M230.0 491.5 L245.8 480.2 L253.3 475.2 L261.1 456.4 L268.8 448.9 L276.4 455.2 L284.1 464.0 L291.6 467.7 L299.2 471.5 L306.7 480.2 L314.5 486.5 L322.0 490.3 L329.7 490.8 L337.3 487.8 L345.0 477.7 L352.5 466.5 L360.3 457.7 L367.8 452.7 L375.3 448.9 L383.1 440.2 L390.6 425.1 L398.4 407.6 L405.9 387.5 L421.3 359.9 L428.8 342.9 L436.6 326.6 L444.1 310.3 L451.9 295.3 L459.4 282.8 L467.2 274.7 L474.7 272.0 L482.4 270.2 L490.0 261.5 L497.7 255.2 L505.2 250.7 L512.8 243.9 L520.5 234.6 L525.3 237.7 L535.8 238.2 L543.6 238.9 L551.1 240.2 L558.9 244.7 L566.4 245.2 L574.2 244.7 L581.7 251.4 L589.4 251.4 L597.0 249.4 L604.7 248.9 L612.2 250.7 L619.5 255.2 L627.0 253.9 L634.8 243.9 L642.3 238.9 L650.1 239.4 L657.6 244.6 L665.4 257.7 L672.9 275.2 L680.7 284.7 L688.2 287.0 L695.9 285.2 L703.5 282.0 L711.2 281.0 L718.7 284.0 L726.5 282.7 L734.0 281.0 L741.8 282.2 L749.3 280.2 L757.1 278.2 L764.6 277.7 L772.4 271.5 L779.9 263.9 L787.6 258.9 L795.2 257.7 L802.9 260.2 L810.5 259.7 L818.2 263.9 L825.7 272.2 L833.0 277.6 L840.5 283.8 L848.3 287.6 L855.8 288.1 L863.6 284.6 L871.1 283.8 L878.9 284.6 L886.4 282.6 L894.1 280.1 L901.7 283.1 L909.4 305.1 L916.9 312.7 L924.7 320.2 L932.2 325.2 L940.0 331.4 L947.5 337.7 L955.3 349.0 L962.8 357.8 L970.6 362.8 L978.1 366.0 L985.9 364.0 L993.4 345.2 L1000.8 310.4 L1008.3 290.4 L1016.1 272.8 L1023.6 260.3 L1031.3 249.0 L1038.9 240.2 L1046.6 231.5 L1054.1 224.0 L1061.9 221.0 L1069.4 219.7 L1077.2 213.9 L1084.7 211.4 L1092.5 221.5 L1100.0 231.5 L1107.8 238.5 L1115.3 242.0 L1123.0 245.3 L1130.6 244.0 L1138.3 242.8 L1145.9 241.5 L1153.6 238.2 L1161.1 230.2 L1168.9 220.2 L1176.4 205.2 L1185.2 186.0 L1192.8 176.9 L1200.3 169.3 L1207.9 161.0 L1215.5 155.7 L1223.2 151.6 L1230.8 148.8 L1238.6 149.3 L1246.1 149.9 L1253.7 149.9 L1261.5 151.4 L1269.2 151.9 L1276.8 151.1 L1284.4 148.1 L1292.1 146.3 L1299.7 141.7" stroke="#000" stroke-width="1.8" fill="none" stroke-linejoin="round" />
<path d="M230 123.5H1320" stroke="#000" stroke-width="1.1" stroke-dasharray="8.5 5.7 3 5.7" fill="none"/>
<path d="M230 123.5H237" stroke="#000" stroke-width="1.1" fill="none"/>
<path d="M230.8 570.2 L242.5 573.1 L254.2 577.5 L263.0 578.1 L271.7 580.5 L279.1 589.2 L286.4 603.8 L295.1 619.9 L303.3 630.1 L311.2 634.5 L320.0 636.0 L327.3 633.0 L336.0 627.2 L344.8 618.4 L352.1 608.2 L360.0 593.6 L368.2 581.9 L375.5 576.1 L384.2 574.6 L393.0 573.7 L400.3 572.3 L409.1 571.1 L417.8 571.1 L426.6 571.7 L435.4 573.1 L444.1 572.6 L452.9 572.6 L461.7 573.1 L470.4 576.9 L477.7 582.8 L485.0 588.6 L493.8 592.1 L501.1 591.6 L509.9 589.2 L517.2 586.9 L525.9 586.9 L533.3 591.6 L540.6 600.9 L547.9 611.1 L555.2 617.0 L563.9 622.8 L572.7 627.2 L581.5 630.1 L590.2 631.0 L599.0 628.7 L606.3 622.8 L613.6 617.9 L622.4 614.1 L627.8 611.1 L635.1 603.8 L643.2 593.6 L651.1 586.3 L658.4 588.6 L665.7 599.4 L673.0 612.6 L681.2 624.9 L689.1 630.1 L696.4 627.8 L703.7 619.9 L711.0 612.0 L718.3 608.2 L725.6 607.3 L734.4 603.8 L741.7 597.4 L749.0 590.7 L757.8 587.2 L765.1 587.8 L772.4 588.3 L779.7 586.9 L788.5 583.4 L795.8 580.5 L803.1 584.0 L810.4 592.1 L817.7 603.8 L826.4 614.1 L833.7 624.3 L841.1 631.6 L848.4 636.0 L855.7 636.0 L864.4 630.1 L871.7 621.9 L879.0 612.6 L887.8 608.2 L895.1 603.2 L902.4 599.4 L909.7 603.8 L917.0 611.1 L924.3 619.3 L933.1 617.9 L940.4 616.1 L947.7 614.6 L955.0 617.0 L963.8 621.4 L971.1 625.7 L978.4 628.7 L986.5 625.7 L993.8 614.1 L1001.1 599.4 L1009.3 584.8 L1017.2 576.1 L1024.5 574.0 L1031.8 576.9 L1039.1 578.1 L1046.4 577.5 L1053.7 576.1 L1062.5 575.2 L1069.8 576.9 L1078.6 581.9 L1085.9 589.2 L1093.2 602.4 L1100.5 617.0 L1108.7 631.6 L1116.6 638.9 L1123.9 640.4 L1131.2 635.4 L1138.5 628.7 L1147.2 621.4 L1154.5 614.9 L1161.8 606.7 L1169.1 597.4 L1177.0 585.7 L1185.2 576.1 L1192.5 572.3 L1199.8 572.3 L1208.6 573.1 L1215.9 573.7 L1223.2 573.7 L1232.0 574.6 L1239.3 578.1 L1246.6 584.8 L1253.9 594.5 L1261.2 605.3 L1269.1 614.9 L1277.3 618.4 L1284.6 614.9 L1291.9 607.3 L1299.2 596.5" stroke="#e82020" stroke-width="1.2" fill="none" stroke-linejoin="round" stroke-dasharray="3 3"/>
<path d="M230.8 571.1 L242.5 575.2 L253.6 581.9 L261.5 576.7 L268.8 579.0 L276.1 592.1 L283.4 612.6 L291.6 627.8 L299.5 632.5 L307.4 638.0 L314.1 636.6 L321.4 634.5 L330.2 624.9 L337.5 620.5 L344.8 608.2 L352.1 593.0 L360.0 578.1 L368.2 574.6 L374.0 576.1 L382.8 574.6 L391.5 573.1 L398.8 571.7 L406.2 570.2 L413.5 571.1 L420.8 571.7 L428.1 573.1 L435.4 574.6 L444.1 571.1 L451.4 572.6 L458.7 574.0 L466.1 578.1 L474.8 584.8 L482.1 592.7 L489.4 594.2 L496.7 591.3 L505.5 587.2 L512.8 587.2 L520.7 582.5 L528.9 595.1 L536.2 606.2 L543.5 619.9 L550.8 617.0 L558.1 623.7 L566.9 628.1 L574.2 629.2 L581.5 630.7 L588.8 631.0 L597.5 629.2 L604.8 616.4 L612.1 614.9 L620.5 612.6 L627.8 607.3 L635.1 592.1 L643.2 582.5 L651.1 584.8 L658.4 596.5 L665.7 614.1 L673.0 627.2 L681.2 633.9 L689.1 630.1 L696.4 618.4 L703.7 609.1 L711.0 606.7 L718.3 608.2 L725.6 606.2 L734.4 596.5 L741.7 589.2 L749.0 585.4 L757.8 586.9 L765.1 588.6 L772.4 589.2 L779.7 583.4 L788.5 577.5 L795.8 579.9 L803.1 593.6 L810.4 602.4 L817.7 616.1 L826.4 620.8 L833.7 634.5 L841.1 636.6 L848.4 637.4 L855.7 633.0 L864.4 619.9 L871.7 612.0 L879.0 606.7 L887.8 605.3 L895.1 597.4 L902.4 595.6 L909.7 617.0 L917.0 619.9 L924.3 621.4 L933.1 613.2 L940.4 614.9 L947.7 615.5 L955.0 621.4 L963.8 626.6 L971.1 630.1 L978.4 628.1 L985.1 621.9 L992.4 600.9 L1001.1 578.1 L1009.3 570.2 L1017.2 574.6 L1024.5 578.4 L1031.8 579.6 L1039.1 577.5 L1046.4 576.1 L1053.7 574.6 L1062.5 576.1 L1069.8 580.5 L1078.6 589.2 L1085.9 599.4 L1093.2 618.4 L1100.5 633.0 L1108.7 643.3 L1116.6 638.9 L1123.9 637.4 L1131.2 628.7 L1138.5 621.4 L1147.2 612.6 L1154.5 609.1 L1161.8 598.0 L1169.1 584.8 L1177.0 572.3 L1185.2 571.1 L1192.5 572.3 L1199.8 573.7 L1208.6 573.7 L1215.9 573.7 L1223.2 573.7 L1232.0 576.9 L1239.3 583.4 L1246.6 593.6 L1253.9 605.3 L1261.2 617.0 L1269.1 621.4 L1277.3 617.9 L1284.6 606.7 L1291.9 598.0 L1299.2 586.3" stroke="#3030dc" stroke-width="1.15" fill="none" stroke-linejoin="round" />
<path d="M229.5 97V652M229 97.5H1321M1320.5 97V652M229 563.5H1321M229 651.5H1321" stroke="#000" stroke-width="1" fill="none" shape-rendering="crispEdges"/>
<path d="M229 565.5H1321" stroke="#333" stroke-width="1" fill="none" shape-rendering="crispEdges"/>
<path d="M1321 151.5H1324 M1321 182.5H1324 M1321 214.5H1324 M1321 245.5H1324 M1321 277.5H1324 M1321 308.5H1324 M1321 340.5H1324 M1321 371.5H1324 M1321 402.5H1324 M1321 434.5H1324 M1321 465.5H1324 M1321 497.5H1324 M1321 528.5H1324 M1321 560.5H1324 M230.5 652V655 M291.5 652V655 M352.5 652V655 M413.5 652V655 M474.5 652V655 M535.5 652V655 M596.5 652V655 M657.5 652V655 M719.5 652V655 M780.5 652V655 M841.5 652V655 M902.5 652V655 M963.5 652V655 M1024.5 652V655 M1085.5 652V655 M1146.5 652V655 M1207.5 652V655 M1268.5 652V655" stroke="#000" stroke-width="1" fill="none" shape-rendering="crispEdges"/>
<path d="M233 104H240L236.5 108Z" fill="#000"/>
</svg>
<span class="t" style="left:244.5px;top:99.8px;font-size:9.5px;line-height:11.4px;color:#000;transform:scaleX(0.938);">USDJPY,H4  149.359 149.574 149.353 149.549</span>
<span class="t" style="left:236.0px;top:112.3px;font-size:9.5px;line-height:11.4px;color:#000;transform:scaleX(0.958);">#34789636 buy 1.00</span>
<span class="t" style="left:234.3px;top:568.3px;font-size:9.5px;line-height:11.4px;color:#000;transform:scaleX(0.916);">Stoch(10,3,3) 78.0693 64.5843</span>
<span class="t" style="left:1327.0px;top:145.5px;font-size:9.5px;line-height:11.4px;color:#000;transform:scaleX(0.932);">149.210</span>
<span class="t" style="left:1327.0px;top:176.9px;font-size:9.5px;line-height:11.4px;color:#000;transform:scaleX(0.932);">148.830</span>
<span class="t" style="left:1327.0px;top:208.4px;font-size:9.5px;line-height:11.4px;color:#000;transform:scaleX(0.932);">148.450</span>
<span class="t" style="left:1327.0px;top:239.8px;font-size:9.5px;line-height:11.4px;color:#000;transform:scaleX(0.932);">148.060</span>
<span class="t" style="left:1327.0px;top:271.2px;font-size:9.5px;line-height:11.4px;color:#000;transform:scaleX(0.932);">147.680</span>
<span class="t" style="left:1327.0px;top:302.6px;font-size:9.5px;line-height:11.4px;color:#000;transform:scaleX(0.932);">147.300</span>
<span class="t" style="left:1327.0px;top:334.1px;font-size:9.5px;line-height:11.4px;color:#000;transform:scaleX(0.932);">146.920</span>
<span class="t" style="left:1327.0px;top:365.5px;font-size:9.5px;line-height:11.4px;color:#000;transform:scaleX(0.932);">146.540</span>
<span class="t" style="left:1327.0px;top:396.9px;font-size:9.5px;line-height:11.4px;color:#000;transform:scaleX(0.932);">146.160</span>
<span class="t" style="left:1327.0px;top:428.4px;font-size:9.5px;line-height:11.4px;color:#000;transform:scaleX(0.932);">145.770</span>
<span class="t" style="left:1327.0px;top:459.8px;font-size:9.5px;line-height:11.4px;color:#000;transform:scaleX(0.932);">145.390</span>
<span class="t" style="left:1327.0px;top:491.2px;font-size:9.5px;line-height:11.4px;color:#000;transform:scaleX(0.932);">145.010</span>
<span class="t" style="left:1327.0px;top:522.6px;font-size:9.5px;line-height:11.4px;color:#000;transform:scaleX(0.932);">144.630</span>
<span class="t" style="left:1327.0px;top:554.0px;font-size:9.5px;line-height:11.4px;color:#000;transform:scaleX(0.932);">144.250</span>
<span class="t" style="left:1327.0px;top:114.8px;font-size:9.5px;line-height:11.4px;color:#000;transform:scaleX(0.932);">149.590</span>
<div class="r" style="left:1322px;top:119px;width:39px;height:10px;background:#000;"></div>
<span class="t" style="left:1324.0px;top:118.3px;font-size:9.5px;line-height:11.4px;color:#fff;transform:scaleX(0.990);">149.549</span>
<span class="t" style="left:1324.0px;top:566.1px;font-size:9.5px;line-height:11.4px;color:#000;transform:scaleX(0.950);">100</span>
<span class="t" style="left:1324.0px;top:578.3px;font-size:9.5px;line-height:11.4px;color:#000;transform:scaleX(0.950);">80</span>
<span class="t" style="left:1324.0px;top:628.8px;font-size:9.5px;line-height:11.4px;color:#000;transform:scaleX(0.950);">20</span>
<span class="t" style="left:1324.0px;top:639.3px;font-size:9.5px;line-height:11.4px;color:#000;transform:scaleX(0.950);">0</span>
<span class="t" style="left:229.4px;top:654.1px;font-size:9.5px;line-height:11.4px;color:#000;transform:scaleX(0.925);">10 Jan 2024</span>
<span class="t" style="left:290.5px;top:654.1px;font-size:9.5px;line-height:11.4px;color:#000;transform:scaleX(0.925);">12 Jan 04:00</span>
<span class="t" style="left:351.6px;top:654.1px;font-size:9.5px;line-height:11.4px;color:#000;transform:scaleX(0.925);">15 Jan 12:00</span>
<span class="t" style="left:412.6px;top:654.1px;font-size:9.5px;line-height:11.4px;color:#000;transform:scaleX(0.925);">16 Jan 20:00</span>
<span class="t" style="left:473.7px;top:654.1px;font-size:9.5px;line-height:11.4px;color:#000;transform:scaleX(0.925);">18 Jan 04:00</span>
<span class="t" style="left:534.8px;top:654.1px;font-size:9.5px;line-height:11.4px;color:#000;transform:scaleX(0.925);">19 Jan 12:00</span>
<span class="t" style="left:595.9px;top:654.1px;font-size:9.5px;line-height:11.4px;color:#000;transform:scaleX(0.925);">22 Jan 20:00</span>
<span class="t" style="left:657.0px;top:654.1px;font-size:9.5px;line-height:11.4px;color:#000;transform:scaleX(0.925);">24 Jan 04:00</span>
<span class="t" style="left:718.0px;top:654.1px;font-size:9.5px;line-height:11.4px;color:#000;transform:scaleX(0.925);">25 Jan 12:00</span>
<span class="t" style="left:779.1px;top:654.1px;font-size:9.5px;line-height:11.4px;color:#000;transform:scaleX(0.925);">26 Jan 20:00</span>
<span class="t" style="left:840.2px;top:654.1px;font-size:9.5px;line-height:11.4px;color:#000;transform:scaleX(0.925);">30 Jan 04:00</span>
<span class="t" style="left:901.3px;top:654.1px;font-size:9.5px;line-height:11.4px;color:#000;transform:scaleX(0.925);">31 Jan 12:00</span>
<span class="t" style="left:962.4px;top:654.1px;font-size:9.5px;line-height:11.4px;color:#000;transform:scaleX(0.925);">1 Feb 20:00</span>
<span class="t" style="left:1023.4px;top:654.1px;font-size:9.5px;line-height:11.4px;color:#000;transform:scaleX(0.925);">5 Feb 04:00</span>
<span class="t" style="left:1084.5px;top:654.1px;font-size:9.5px;line-height:11.4px;color:#000;transform:scaleX(0.925);">6 Feb 12:00</span>
<span class="t" style="left:1145.6px;top:654.1px;font-size:9.5px;line-height:11.4px;color:#000;transform:scaleX(0.925);">7 Feb 20:00</span>
<span class="t" style="left:1206.7px;top:654.1px;font-size:9.5px;line-height:11.4px;color:#000;transform:scaleX(0.925);">9 Feb 04:00</span>
<span class="t" style="left:1267.8px;top:654.1px;font-size:9.5px;line-height:11.4px;color:#000;transform:scaleX(0.925);">12 Feb 12:00</span>
<div class="r" style="left:224px;top:673px;width:1145px;height:18px;background:#f0f0f0;"></div>
<div class="r" style="left:228px;top:673px;width:1137px;height:1px;background:#222;"></div>
<span class="t" style="left:242.0px;top:675.0px;font-size:12.5px;line-height:15.0px;color:#8a8a8a;transform:scaleX(0.829);">SP500,Daily</span>
<span class="t" style="left:321.0px;top:675.0px;font-size:12.5px;line-height:15.0px;color:#8a8a8a;transform:scaleX(0.808);">EURUSDzero,H1</span>
<span class="t" style="left:422.0px;top:675.0px;font-size:12.5px;line-height:15.0px;color:#8a8a8a;transform:scaleX(0.839);">NZDUSD,H1</span>
<span class="t" style="left:505.0px;top:675.0px;font-size:12.5px;line-height:15.0px;color:#8a8a8a;transform:scaleX(0.854);">XAUUSDzero,Daily</span>
<span class="t" style="left:620.0px;top:675.0px;font-size:12.5px;line-height:15.0px;color:#8a8a8a;transform:scaleX(0.873);">USDIndex,Daily</span>
<span class="t" style="left:719.0px;top:675.0px;font-size:12.5px;line-height:15.0px;color:#8a8a8a;transform:scaleX(0.835);">USWTIzero,Daily</span>
<span class="t" style="left:821.0px;top:675.0px;font-size:12.5px;line-height:15.0px;color:#8a8a8a;transform:scaleX(0.847);">XAGUSDzero,M1</span>
<div class="r" style="left:915px;top:673px;width:75px;height:17px;background:#fff;border:1px solid #222;border-top:1px solid #fff;box-sizing:border-box;"></div>
<span class="t" style="left:926.0px;top:675.0px;font-size:12.5px;line-height:15.0px;color:#111;transform:scaleX(0.804);">USDJPY,H4</span>
<span class="t" style="left:1001.0px;top:675.0px;font-size:12.5px;line-height:15.0px;color:#8a8a8a;transform:scaleX(0.844);">DJ30,Daily</span>
<span class="t" style="left:1076.0px;top:675.0px;font-size:12.5px;line-height:15.0px;color:#8a8a8a;transform:scaleX(0.811);">BTCUSD,Daily</span>
<span class="t" style="left:1164.0px;top:675.0px;font-size:12.5px;line-height:15.0px;color:#8a8a8a;transform:scaleX(0.831);">EURAUD,H1</span>
<span class="t" style="left:1247.0px;top:675.0px;font-size:12.5px;line-height:15.0px;color:#8a8a8a;transform:scaleX(0.831);">AUDUSD,H1</span>
<div class="r" style="left:311px;top:676px;width:1px;height:12px;background:#777;"></div>
<div class="r" style="left:411px;top:676px;width:1px;height:12px;background:#777;"></div>
<div class="r" style="left:494px;top:676px;width:1px;height:12px;background:#777;"></div>
<div class="r" style="left:608px;top:676px;width:1px;height:12px;background:#777;"></div>
<div class="r" style="left:708px;top:676px;width:1px;height:12px;background:#777;"></div>
<div class="r" style="left:810px;top:676px;width:1px;height:12px;background:#777;"></div>
<div class="r" style="left:1063px;top:676px;width:1px;height:12px;background:#777;"></div>
<div class="r" style="left:1153px;top:676px;width:1px;height:12px;background:#777;"></div>
<div class="r" style="left:1236px;top:676px;width:1px;height:12px;background:#777;"></div>
<div class="r" style="left:1320px;top:676px;width:1px;height:12px;background:#777;"></div>
<svg style="left:1334px;top:679px" width="5" height="8"><path d="M4.5 0.5L0.5 4L4.5 7.5Z" fill="#999"/></svg>
<svg style="left:1352px;top:679px" width="5" height="8"><path d="M0.5 0.5L4.5 4L0.5 7.5Z" fill="#111"/></svg>
<svg style="left:3px;top:3px" width="16" height="10" viewBox="0 0 16 10"><path d="M10.500 5.500C11.500 2.500 13.500 1.500 15 1.500C13.300 2.800 12.300 4.200 12 6.200Z" fill="#6ab0ee"/><text x="0.500" y="6.800" font-family="Liberation Sans" font-weight="bold" font-style="italic" font-size="5.600" fill="#1a2a6a" textLength="10.500" lengthAdjust="spacingAndGlyphs">ACY</text></svg>
<svg style="left:1px;top:24px" width="15" height="16" viewBox="0 0 15 16"><rect x="0.7" y="1.7" width="10" height="8" rx="1" fill="#eef4fb" stroke="#4a86c8" stroke-width="1.2"/><rect x="3.7" y="5.7" width="10" height="8.5" rx="1" fill="#f4f8fd" stroke="#4a86c8" stroke-width="1.2"/><path d="M5.5 11l1.5-2.5 1.5 2 1.5-2.5 1.5 3" stroke="#4a86c8" stroke-width="0.9" fill="none"/><path d="M2.5 3.8v2M4.5 3.8v1" stroke="#4a86c8" stroke-width="0.9"/></svg>
<div class="r" style="left:0px;top:47px;width:2px;height:18px;background:repeating-linear-gradient(180deg,#b8bcc8 0 1px,transparent 1px 2px);"></div>
<svg style="left:6px;top:47px" width="16" height="18" viewBox="0 0 16 18"><rect x="1.2" y="2.2" width="11.4" height="9.4" rx="1" fill="#f2f7fd" stroke="#3f7cc4" stroke-width="1.3"/><rect x="2" y="3" width="9.8" height="2" fill="#c7dcf3"/><path d="M3.5 7v2.5" stroke="#c06a6a" stroke-width="1"/><path d="M5.8 7.8h3.6v-3.6h3.8v3.6h3.6v3.8h-3.6v3.6h-3.8v-3.6h-3.6z" fill="#25d025" stroke="#128a12" stroke-width="0.9"/></svg>
<svg style="left:27px;top:55px" width="6" height="4" viewBox="0 0 6 4"><path d="M0 0H6L3 3.6Z" fill="#111"/></svg>
<svg style="left:41px;top:47px" width="18" height="18" viewBox="0 0 18 18"><rect x="1.6" y="2.2" width="12" height="9.4" rx="1" fill="#eaf2fb" stroke="#3f7cc4" stroke-width="1.3"/><rect x="4.8" y="7" width="12" height="9.6" rx="1" fill="#f4f8fd" stroke="#3f7cc4" stroke-width="1.3"/><path d="M4 4v3M3 5l1-1 1 1M3 6l1 1 1-1M5.5 7h6M10 6l1.5 1-1.5 1M7.5 13h7M9 12l-1.5 1 1.5 1" stroke="#5a8ec8" stroke-width="0.8" fill="none"/></svg>
<svg style="left:63px;top:55px" width="6" height="4" viewBox="0 0 6 4"><path d="M0 0H6L3 3.6Z" fill="#111"/></svg>
<div class="r" style="left:75px;top:46px;width:1px;height:19px;background:#a8a8a8;"></div>
<div class="r" style="left:76px;top:46px;width:1px;height:19px;background:#fcfcfc;"></div>
<div class="r" style="left:80px;top:45px;width:24px;height:21px;background:#f9f9f9;border-top:1px solid #b0b0b0;border-left:1px solid #b0b0b0;box-sizing:border-box;"></div>
<svg style="left:84px;top:48px" width="16" height="16" viewBox="0 0 16 16"><rect x="0.8" y="1.2" width="13.6" height="13.8" rx="1" fill="#f6f9fd" stroke="#4a86c8" stroke-width="1.4"/><path d="M5.3 2.8l3 3h-1.8v2.2h-2.4v-2.2h-1.8z" fill="#28c028" stroke="#158a15" stroke-width="0.7"/><path d="M9.3 13.2l3-3h-1.8v-2.2h-2.4v2.2h-1.8z" fill="#f26a2a" stroke="#c04010" stroke-width="0.7"/></svg>
<svg style="left:111px;top:49px" width="16" height="16" viewBox="0 0 16 16"><circle cx="7.9" cy="7.6" r="4.6" fill="none" stroke="#555" stroke-width="1.4"/><path d="M7.9 0.5v5M7.9 9.7v5M0.8 7.6h5M10 7.6h5" stroke="#555" stroke-width="1.3"/><path d="M7.9 0l1.6 2h-3.2zM7.9 15.2l1.6-2h-3.2zM0.3 7.6l2-1.6v3.2zM15.5 7.6l-2-1.6v3.2z" fill="#555"/></svg>
<div class="r" style="left:133px;top:45px;width:24px;height:21px;background:#f9f9f9;border-top:1px solid #b0b0b0;border-left:1px solid #b0b0b0;box-sizing:border-box;"></div>
<svg style="left:135px;top:47px" width="20" height="19" viewBox="0 0 20 19"><path d="M1.5 3.2q0-1 1-1h3l1.2 1.6h4.2q1 0 1 1v6h-10.4z" fill="#f3d76a" stroke="#c9a22c" stroke-width="0.9"/><path d="M5.7 12v6" stroke="#333" stroke-width="1" stroke-dasharray="1 1"/><path d="M13.3 6.4l1.6 3.4 3.7.4-2.8 2.5.8 3.7-3.3-1.9-3.3 1.9.8-3.7-2.8-2.5 3.7-.4z" fill="#f7d83a" stroke="#b8901c" stroke-width="0.9"/></svg>
<div class="r" style="left:160px;top:45px;width:24px;height:21px;background:#f9f9f9;border-top:1px solid #b0b0b0;border-left:1px solid #b0b0b0;box-sizing:border-box;"></div>
<svg style="left:163px;top:48px" width="18" height="16" viewBox="0 0 18 16"><rect x="1.2" y="1.2" width="15" height="13.2" rx="1.2" fill="#fff" stroke="#2f6fc0" stroke-width="1.4"/><rect x="1.6" y="1.6" width="3" height="12.4" fill="#2a68b8"/><path d="M7 4.5h8M7 7h8M7 9.5h8M7 12h8" stroke="#b8c8e4" stroke-width="0.8"/><path d="M5.6 4.5h1M5.6 7h1M5.6 9.5h1" stroke="#c03030" stroke-width="1"/></svg>
<svg style="left:190px;top:47px" width="19" height="19" viewBox="0 0 19 19"><rect x="1.5" y="1.5" width="11" height="12" fill="#f4f4f0" stroke="#bdbdb0" stroke-width="0.9"/><path d="M12.5 13.5l5 4.3" stroke="#e0a020" stroke-width="2.6" stroke-linecap="round"/><circle cx="8.7" cy="9.2" r="4.6" fill="#b4d2ee" fill-opacity="0.85" stroke="#6a9ccc" stroke-width="1.2"/><path d="M6.5 5.5v4.5M10.5 4.5v3M8.5 7v4" stroke="#3a78b8" stroke-width="0.9"/></svg>
<div class="r" style="left:215px;top:46px;width:1px;height:19px;background:#a8a8a8;"></div>
<div class="r" style="left:216px;top:46px;width:1px;height:19px;background:#fcfcfc;"></div>
<svg style="left:223px;top:47px" width="16" height="20" viewBox="0 0 16 20"><path d="M1.5 1.5h7.5l3.5 3.5v9.5h-11z" fill="#fafafa" stroke="#8a8a8a" stroke-width="1"/><path d="M9 1.5v3.5h3.5" fill="#e8e8e8" stroke="#8a8a8a" stroke-width="0.8"/><path d="M3.5 5h4M3.5 7.5h6M3.5 10h4" stroke="#9a9a9a" stroke-width="1"/><path d="M5.5 11.3h3.6v-3.6h3.8v3.6h3.6v3.8h-3.6v3.6h-3.8v-3.6h-3.6z" fill="#25d025" stroke="#128a12" stroke-width="0.9"/></svg>
<span class="t" style="left:243.0px;top:47.5px;font-size:12.5px;line-height:15.0px;color:#111;transform:scaleX(0.894);">New Order</span>
<svg style="left:307px;top:48px" width="19" height="17" viewBox="0 0 19 17"><defs><linearGradient id="gb" x1="0" y1="0" x2="1" y2="0.6"><stop offset="0" stop-color="#d09a10"/><stop offset="0.45" stop-color="#f8de58"/><stop offset="1" stop-color="#d8a21c"/></linearGradient></defs><path d="M7.100 1.600l6.800 3.200 2.800 4.100-7.600 6.400-8.100-4.800z" fill="url(#gb)" stroke="#b8860b" stroke-width="0.900" stroke-linejoin="round"/><path d="M1.300 10.700l7.900 4.400 7.300-6.100" fill="none" stroke="#9a6a08" stroke-width="1.500"/><path d="M7.300 3l5.800 2.700" stroke="#fff2a0" stroke-width="0.800" fill="none"/></svg>
<svg style="left:334px;top:47px" width="18" height="18" viewBox="0 0 18 18"><path d="M3.5 1.5h7.5l2.500 2.500v8h-10z" fill="#2c8ee4" stroke="#1d6cc0" stroke-width="0.8"/><path d="M6.500 3.5v5M6.500 5.5h4.500M8.500 7.5h2.500" stroke="#fff" stroke-width="1.2"/><path d="M3.5 16.300a2.600 2.600 0 0 1 0.300-5.200a3.600 3.600 0 0 1 6.800-0.600a2.900 2.900 0 0 1 3.500 5.800z" fill="#fbfdff" stroke="#5f8fd0" stroke-width="1"/></svg>
<svg style="left:361px;top:47px" width="18" height="19" viewBox="0 0 18 19"><path d="M8.100 9a7.500 7.500 0 0 0 0 15z" fill="none"/><path d="M8.200 1.500a7.500 7.500 0 0 0 -1.500 14.800" fill="none" stroke="#8fa4cc" stroke-width="1.500"/><path d="M8.200 4.700a4.300 4.300 0 0 0 -1.200 8.300" fill="none" stroke="#9fb2d6" stroke-width="1.400"/><path d="M8.200 1.500a7.500 7.500 0 0 1 2 14.700" fill="none" stroke="#5ab45a" stroke-width="1.600"/><path d="M8.200 4.700a4.300 4.300 0 0 1 2.200 7.900" fill="none" stroke="#6cc06c" stroke-width="1.500"/><path d="M8.200 9l-1.100 8.600q1.600 0.600 3.400-0.300l-0.600-4z" fill="#3aa63a"/><circle cx="8.200" cy="9" r="2" fill="#2d6fc4"/></svg>
<svg style="left:386px;top:47px" width="20" height="19" viewBox="0 0 20 19"><path d="M2.500 8l8 9 7.500-9.500z" fill="#f6d040" stroke="#c8a020" stroke-width="0.8"/><path d="M1.500 7.500q0-3 4-3.500q1-2.500 4.500-2.500t4.500 2.500q4 0.500 4 3.500q-4 2.500-8.500 2.500t-8.500-2.500z" fill="#4aa4dc" stroke="#2a7ab8" stroke-width="0.8"/><ellipse cx="10" cy="4.600" rx="3.500" ry="1.300" fill="#8ccaf0"/><circle cx="13.400" cy="12.600" r="4.200" fill="#d82818"/><rect x="11.800" y="11" width="3.200" height="3.200" fill="#fff"/></svg>
<span class="t" style="left:408.0px;top:47.5px;font-size:12.5px;line-height:15.0px;color:#111;transform:scaleX(0.924);">AutoTrading</span>
<div class="r" style="left:476px;top:45px;width:1px;height:23px;background:#b4b4b4;"></div>
<div class="r" style="left:480px;top:47px;width:3px;height:18px;background:repeating-linear-gradient(180deg,#b8bcc8 0 1px,transparent 1px 2px);"></div>
<svg style="left:490px;top:49px" width="17" height="16" viewBox="0 0 17 16"><path d="M3.500 1.500v13M1 12.500h13.500" stroke="#555" stroke-width="1.300" fill="none"/><path d="M3.500 0l1.600 2.200h-3.200zM15.500 12.500l-2.200-1.600v3.200z" fill="#555"/><path d="M9.500 2.500v8M9.500 3h2M7.500 9.500h2" stroke="#2a9a2a" stroke-width="1.400" fill="none"/></svg>
<div class="r" style="left:513px;top:45px;width:23px;height:21px;background:#f9f9f9;border-top:1px solid #b0b0b0;border-left:1px solid #b0b0b0;box-sizing:border-box;"></div>
<svg style="left:517px;top:48px" width="17" height="17" viewBox="0 0 17 17"><path d="M3.500 2.500v13M1 13.500h13.500" stroke="#555" stroke-width="1.300" fill="none"/><path d="M3.500 1l1.600 2.200h-3.200zM15.500 13.500l-2.200-1.600v3.200z" fill="#555"/><path d="M9.700 0.500v12" stroke="#1c8a1c" stroke-width="1.200"/><rect x="7.200" y="2.700" width="5" height="7.200" rx="1" fill="#30d030" stroke="#1c8a1c" stroke-width="0.900"/></svg>
<svg style="left:544px;top:49px" width="17" height="16" viewBox="0 0 17 16"><path d="M3.500 1.500v13M1 12.500h13.500" stroke="#555" stroke-width="1.300" fill="none"/><path d="M3.500 0l1.600 2.200h-3.200zM15.500 12.500l-2.200-1.600v3.200z" fill="#555"/><path d="M3.500 9.500q2-5 5-5.500q2 0.500 5.500 4.500" stroke="#3a9a4a" stroke-width="1.300" fill="none"/></svg>
<div class="r" style="left:567px;top:46px;width:1px;height:19px;background:#a8a8a8;"></div>
<div class="r" style="left:568px;top:46px;width:1px;height:19px;background:#fcfcfc;"></div>
<svg style="left:575px;top:48px" width="17" height="17" viewBox="0 0 17 17"><path d="M9.500 9.800l5.300 4.600" stroke="#e2c020" stroke-width="2.800" stroke-linecap="round"/><path d="M9.500 9.800l5.300 4.600" stroke="#f4e060" stroke-width="1.200" stroke-linecap="round"/><circle cx="6.200" cy="6.100" r="4.900" fill="#b6dcf6" stroke="#4a8ed0" stroke-width="1.300"/><path d="M3.400 6.100h5.600M6.200 3.300v5.600" stroke="#2a6cc0" stroke-width="1.600"/></svg>
<svg style="left:602px;top:48px" width="17" height="17" viewBox="0 0 17 17"><path d="M9.500 9.800l5.300 4.600" stroke="#e2c020" stroke-width="2.800" stroke-linecap="round"/><path d="M9.500 9.800l5.300 4.600" stroke="#f4e060" stroke-width="1.200" stroke-linecap="round"/><circle cx="6.200" cy="6.100" r="4.900" fill="#b6dcf6" stroke="#4a8ed0" stroke-width="1.300"/><path d="M3.400 6.100h5.600" stroke="#2a6cc0" stroke-width="1.600"/></svg>
<svg style="left:629px;top:48px" width="16" height="16" viewBox="0 0 16 16"><rect x="0.300" y="0.600" width="7.200" height="7.200" fill="#4a9a2a"/><rect x="8.200" y="0.600" width="7.200" height="7.200" fill="#2a5cb0"/><rect x="0.300" y="8.400" width="7.200" height="7.200" fill="#2a5cb0"/><rect x="8.200" y="8.400" width="7.200" height="7.200" fill="#4a9a2a"/><rect x="1.300" y="3" width="5.200" height="3.600" fill="#e8f4e0"/><rect x="9.200" y="3" width="5.200" height="3.600" fill="#e4ecfa"/><rect x="1.300" y="10.800" width="5.200" height="3.600" fill="#e4ecfa"/><rect x="9.200" y="10.800" width="5.200" height="3.600" fill="#e8f4e0"/></svg>
<div class="r" style="left:653px;top:46px;width:1px;height:19px;background:#a8a8a8;"></div>
<div class="r" style="left:654px;top:46px;width:1px;height:19px;background:#fcfcfc;"></div>
<div class="r" style="left:658px;top:45px;width:24px;height:21px;background:#f9f9f9;border-top:1px solid #b0b0b0;border-left:1px solid #b0b0b0;box-sizing:border-box;"></div>
<svg style="left:662px;top:49px" width="17" height="16" viewBox="0 0 17 16"><path d="M3.500 1.500v13M1 12.500h13.500" stroke="#555" stroke-width="1.300" fill="none"/><path d="M3.500 0l1.600 2.200h-3.200zM15.500 12.500l-2.200-1.600v3.200z" fill="#555"/><path d="M8.500 3.200v6.400l4.200-3.200z" fill="#70e070" stroke="#1c9a1c" stroke-width="1.100"/></svg>
<svg style="left:689px;top:49px" width="17" height="16" viewBox="0 0 17 16"><path d="M3.500 1.500v13M1 12.500h13.500" stroke="#555" stroke-width="1.300" fill="none"/><path d="M3.500 0l1.600 2.200h-3.200zM15.500 12.500l-2.200-1.600v3.200z" fill="#555"/><path d="M9.800 2v9" stroke="#3a6cb0" stroke-width="1.300"/><path d="M14.500 6.300h-3.500M12.800 4.300l-2.200 2 2.200 2" stroke="#d84010" stroke-width="1.300" fill="none"/></svg>
<div class="r" style="left:712px;top:46px;width:1px;height:19px;background:#a8a8a8;"></div>
<div class="r" style="left:713px;top:46px;width:1px;height:19px;background:#fcfcfc;"></div>
<svg style="left:720px;top:47px" width="18" height="20" viewBox="0 0 18 20"><path d="M2 1.500h6.500l3.500 3.500v9h-10z" fill="#f6f6f6" stroke="#8a8a8a" stroke-width="1"/><path d="M8.500 1.500v3.500h3.500" fill="#e4e4e4" stroke="#8a8a8a" stroke-width="0.800"/><path d="M7.300 5.200q-1.800-0.500-2 1.500l-0.600 5.500M3.800 8.200h3" stroke="#4a6a9a" stroke-width="1.100" fill="none"/><path d="M5.9 11.1h3.6v-3.6h3.8v3.6h3.6v3.8h-3.6v3.6h-3.8v-3.6h-3.6z" fill="#25d025" stroke="#128a12" stroke-width="0.9"/></svg>
<svg style="left:740px;top:55px" width="6" height="4" viewBox="0 0 6 4"><path d="M0 0H6L3 3.6Z" fill="#111"/></svg>
<svg style="left:755px;top:48px" width="17" height="17" viewBox="0 0 17 17"><circle cx="8.400" cy="8" r="6.600" fill="#fdfdfd" stroke="#1c64c0" stroke-width="2.400"/><circle cx="8.400" cy="8" r="7.600" fill="none" stroke="#3a86e0" stroke-width="0.600"/><path d="M7.800 4.200v4.200h3.200" stroke="#333" stroke-width="1.200" fill="none"/><path d="M7.800 8.400l2.500-1.500" stroke="#c03030" stroke-width="0.800"/></svg>
<svg style="left:776px;top:55px" width="6" height="4" viewBox="0 0 6 4"><path d="M0 0H6L3 3.6Z" fill="#111"/></svg>
<svg style="left:790px;top:48px" width="18" height="16" viewBox="0 0 18 16"><rect x="1.600" y="1.600" width="14.800" height="12.600" rx="1" fill="#fff" stroke="#3f7cc4" stroke-width="1.500"/><rect x="2.300" y="2.300" width="13.400" height="2" fill="#c7dcf3"/><path d="M2 8.200h14" stroke="#3f7cc4" stroke-width="1"/><path d="M3.500 6.800l3-0.800 2-1 2 0.800 3-1.200" stroke="#d03020" stroke-width="1" fill="none"/><path d="M3.500 12.500l3-1.500 2 0.500 2.500-2 2.500 2" stroke="#2a9a2a" stroke-width="1" fill="none"/></svg>
<svg style="left:811px;top:55px" width="6" height="4" viewBox="0 0 6 4"><path d="M0 0H6L3 3.6Z" fill="#111"/></svg>
<div class="r" style="left:822px;top:45px;width:1px;height:24px;background:#b4b4b4;"></div>
<svg style="left:1313px;top:48px" width="16" height="16" viewBox="0 0 16 16"><path d="M7.600 7.600l-5 5.200" stroke="#3a68c8" stroke-width="2.400" stroke-linecap="round"/><circle cx="10" cy="5.400" r="3.600" fill="#f4f8ff" stroke="#3a68c8" stroke-width="1.500"/></svg>
<svg style="left:1336px;top:44px" width="26" height="24" viewBox="0 0 26 24"><path d="M2.500 13.500q0-4.500 6-4.500t6 4.500q0 3.800-5 4.300l-3.800 2.800l0.800-3.200q-4-1-4-3.900z" fill="#e4e4e4" stroke="#b0b0b0" stroke-width="0.800"/><circle cx="16.100" cy="9.400" r="7.900" fill="#e03424"/><circle cx="16.100" cy="8.600" r="6.500" fill="#ec4c38" fill-opacity="0.500"/><path d="M14.300 6.800l2.400-1.700v8.600" stroke="#fff" stroke-width="1.900" fill="none"/></svg>
<div class="r" style="left:0px;top:72px;width:2px;height:18px;background:repeating-linear-gradient(180deg,#b8bcc8 0 1px,transparent 1px 2px);"></div>
<div class="r" style="left:4px;top:70px;width:24px;height:22px;background:#f9f9f9;border-top:1px solid #b0b0b0;border-left:1px solid #b0b0b0;box-sizing:border-box;"></div>
<svg style="left:9px;top:74px" width="12" height="16" viewBox="0 0 12 16"><path d="M2.300 1.500v11.500l2.800-2.600 2.200 4.600 1.900-0.900-2.200-4.500h3.800z" fill="#444" stroke="#444" stroke-width="0.600" stroke-linejoin="round"/></svg>
<svg style="left:35px;top:75px" width="16" height="16" viewBox="0 0 16 16"><path d="M7.500 0.500v5.800M7.500 8.800v5.800M0.300 7.500h5.900M8.800 7.500h5.900" stroke="#444" stroke-width="1.100"/></svg>
<div class="r" style="left:58px;top:71px;width:1px;height:20px;background:#a8a8a8;"></div>
<div class="r" style="left:59px;top:71px;width:1px;height:20px;background:#fcfcfc;"></div>
<div class="r" style="left:74px;top:76px;width:1.5px;height:13px;background:#5a5a5a;"></div>
<div class="r" style="left:96px;top:82px;width:12px;height:1.4px;background:#444;"></div>
<svg style="left:122px;top:76px" width="14" height="14" viewBox="0 0 14 14"><path d="M1 12.500l12-11.300" stroke="#444" stroke-width="1.300"/></svg>
<svg style="left:147px;top:74px" width="18" height="18" viewBox="0 0 18 18"><path d="M1 12l11.500-9.500M3 15.500l11.500-9.500M2.500 9.500l2.500 7M6 6.800l2.500 7M9.500 4l2.500 7M12 1l1.500 5" stroke="#444" stroke-width="1" fill="none"/><text x="11.300" y="17.500" font-family="Liberation Sans" font-weight="bold" font-size="6.500" fill="#333">E</text></svg>
<svg style="left:174px;top:73.5px" width="18" height="18" viewBox="0 0 18 18"><path d="M1.200 1.800h13M1.200 4.500h13M1.200 8.500h13M1.200 12.400h9" stroke="#555" stroke-width="1" stroke-dasharray="1.500 1"/><text x="10.800" y="17.300" font-family="Liberation Sans" font-weight="bold" font-size="6.500" fill="#333">F</text></svg>
<span class="t" style="left:204.5px;top:76.4px;font-size:11.5px;line-height:13.8px;color:#505050;transform:scaleX(1.043);">A</span>
<svg style="left:229px;top:74.2px" width="14" height="16" viewBox="0 0 14 16"><rect x="1.500" y="2.500" width="11" height="12" fill="none" stroke="#555" stroke-width="1" stroke-dasharray="1 1"/><rect x="0.800" y="1.800" width="1.600" height="1.600" fill="#444"/><path d="M3.800 5h6.600M7.100 5v7.500" stroke="#555" stroke-width="1.600" fill="none"/></svg>
<svg style="left:255px;top:75px" width="15" height="15" viewBox="0 0 15 15"><path d="M3.700 1l3 2.600-3 2.600-3-2.600z" fill="#444"/><path d="M10.800 8.600l3.200 2.700-3.200 2.700-3.200-2.700z" fill="#444"/><path d="M3.500 8.500l2 2.500 4.500-6" stroke="#444" stroke-width="1.400" fill="none"/></svg>
<svg style="left:274px;top:81px" width="6" height="4" viewBox="0 0 6 4"><path d="M0 0H6L3 3.6Z" fill="#111"/></svg>
<div class="r" style="left:284px;top:70px;width:1px;height:23px;background:#b4b4b4;"></div>
<div class="r" style="left:288px;top:72px;width:3px;height:18px;background:repeating-linear-gradient(180deg,#b8bcc8 0 1px,transparent 1px 2px);"></div>
<div class="r" style="left:428px;top:70px;width:23px;height:22px;background:#f9f9f9;border-top:1px solid #b0b0b0;border-left:1px solid #b0b0b0;box-sizing:border-box;"></div>
<span class="t" style="left:299.5px;top:77.0px;font-size:9.2px;line-height:11.0px;color:#4a4a4a;transform:scaleX(0.900);">M1</span>
<span class="t" style="left:326.0px;top:77.0px;font-size:9.2px;line-height:11.0px;color:#4a4a4a;transform:scaleX(0.939);">M5</span>
<span class="t" style="left:350.7px;top:77.0px;font-size:9.2px;line-height:11.0px;color:#4a4a4a;transform:scaleX(0.967);">M15</span>
<span class="t" style="left:377.6px;top:77.0px;font-size:9.2px;line-height:11.0px;color:#4a4a4a;transform:scaleX(0.944);">M30</span>
<span class="t" style="left:407.4px;top:77.0px;font-size:9.2px;line-height:11.0px;color:#4a4a4a;transform:scaleX(0.901);">H1</span>
<span class="t" style="left:433.0px;top:77.0px;font-size:9.2px;line-height:11.0px;color:#4a4a4a;transform:scaleX(1.020);">H4</span>
<span class="t" style="left:460.7px;top:77.0px;font-size:9.2px;line-height:11.0px;color:#4a4a4a;transform:scaleX(0.927);">D1</span>
<span class="t" style="left:487.0px;top:77.0px;font-size:9.2px;line-height:11.0px;color:#4a4a4a;transform:scaleX(0.957);">W1</span>
<span class="t" style="left:512.4px;top:77.0px;font-size:9.2px;line-height:11.0px;color:#4a4a4a;transform:scaleX(0.965);">MN</span>
<div class="r" style="left:534px;top:70px;width:1px;height:23px;background:#b4b4b4;"></div>
<svg style="left:6px;top:414.2px" width="16" height="16" viewBox="0 0 16 16"><rect x="0.700" y="1.700" width="10" height="8" rx="1" fill="#eef4fb" stroke="#4a86c8" stroke-width="1.200"/><rect x="3.700" y="5.700" width="10" height="8.500" rx="1" fill="#f4f8fd" stroke="#4a86c8" stroke-width="1.200"/><path d="M5.500 11l1.500-2.500 1.500 2 1.500-2.500 1.500 3" stroke="#4a86c8" stroke-width="0.900" fill="none"/></svg>
<svg style="left:24px;top:431.37px" width="18" height="16" viewBox="0 0 18 16"><circle cx="5.500" cy="4.500" r="3.200" fill="#e8b030" stroke="#a87810" stroke-width="0.800"/><path d="M0.800 14.500q0-6 4.700-6t4.700 6z" fill="#38c038" stroke="#1c8a1c" stroke-width="0.800"/><circle cx="11.500" cy="5" r="3.200" fill="#f0c040" stroke="#a87810" stroke-width="0.800"/><path d="M6.500 15q0-6 5-6t5 6z" fill="#f0c040" stroke="#a87810" stroke-width="0.800"/></svg>
<svg style="left:9px;top:435px" width="9" height="9" viewBox="0 0 9 9"><rect x="0.500" y="0.500" width="8" height="8" fill="#fbfbfb" stroke="#9c9c9c" stroke-width="1"/><path d="M2.500 4.500h4" stroke="#2a4a9a" stroke-width="1"/></svg>
<svg style="left:46px;top:448.53999999999996px" width="14" height="16" viewBox="0 0 14 16"><path d="M2.500 2l6-1.500 3.500 1.500v12l-3.500 1.500-6-1.500z" fill="#2a84e0" stroke="#1a5cb0" stroke-width="0.800"/><path d="M2.500 2l3.500 1v12.300l-3.500-1.300z" fill="#7cc0f8"/><path d="M7.500 4.500h3M7.500 6.500h3" stroke="#bfe0ff" stroke-width="0.800"/></svg>
<svg style="left:29px;top:453px" width="9" height="9" viewBox="0 0 9 9"><rect x="0.500" y="0.500" width="8" height="8" fill="#fbfbfb" stroke="#9c9c9c" stroke-width="1"/><path d="M2.500 4.500h4M4.500 2.500v4" stroke="#2a4a9a" stroke-width="1"/></svg>
<svg style="left:46px;top:465.71px" width="14" height="16" viewBox="0 0 14 16"><path d="M2.500 2l6-1.500 3.500 1.500v12l-3.500 1.500-6-1.500z" fill="#2a84e0" stroke="#1a5cb0" stroke-width="0.800"/><path d="M2.500 2l3.500 1v12.300l-3.500-1.300z" fill="#7cc0f8"/><path d="M7.500 4.500h3M7.500 6.500h3" stroke="#bfe0ff" stroke-width="0.800"/></svg>
<svg style="left:29px;top:470px" width="9" height="9" viewBox="0 0 9 9"><rect x="0.500" y="0.500" width="8" height="8" fill="#fbfbfb" stroke="#9c9c9c" stroke-width="1"/><path d="M2.500 4.500h4" stroke="#2a4a9a" stroke-width="1"/></svg>
<svg style="left:66px;top:482.88px" width="14" height="16" viewBox="0 0 14 16"><circle cx="7" cy="4.800" r="3.300" fill="#f0c860" stroke="#b08820" stroke-width="0.800"/><path d="M1.200 15q0-6.500 5.800-6.500t5.800 6.500z" fill="#38c038" stroke="#1c8a1c" stroke-width="0.900"/></svg>
<svg style="left:66px;top:500.05px" width="14" height="16" viewBox="0 0 14 16"><circle cx="7" cy="4.800" r="3.300" fill="#f0c860" stroke="#b08820" stroke-width="0.800"/><path d="M1.200 15q0-6.500 5.800-6.500t5.800 6.500z" fill="#38c038" stroke="#1c8a1c" stroke-width="0.900"/></svg>
<svg style="left:24.5px;top:517.22px" width="17" height="17" viewBox="0 0 17 17"><rect x="1" y="1.500" width="12.500" height="12.500" rx="2" fill="#f7d960" stroke="#c8a020" stroke-width="1"/><path d="M9.300 4.300q-2-0.600-2.300 1.500l-0.900 5.700M4.800 7.500h3.400" stroke="#8a5a10" stroke-width="1.200" fill="none"/></svg>
<svg style="left:9px;top:521px" width="9" height="9" viewBox="0 0 9 9"><rect x="0.500" y="0.500" width="8" height="8" fill="#fbfbfb" stroke="#9c9c9c" stroke-width="1"/><path d="M2.500 4.500h4" stroke="#2a4a9a" stroke-width="1"/></svg>
<svg style="left:44.5px;top:534.39px" width="17" height="17" viewBox="0 0 17 17"><rect x="1" y="1.500" width="12.500" height="12.500" rx="2" fill="#f7d960" stroke="#c8a020" stroke-width="1"/><path d="M9.300 4.300q-2-0.600-2.300 1.500l-0.900 5.700M4.800 7.500h3.400" stroke="#8a5a10" stroke-width="1.200" fill="none"/></svg>
<svg style="left:29px;top:538px" width="9" height="9" viewBox="0 0 9 9"><rect x="0.500" y="0.500" width="8" height="8" fill="#fbfbfb" stroke="#9c9c9c" stroke-width="1"/><path d="M2.500 4.500h4M4.500 2.500v4" stroke="#2a4a9a" stroke-width="1"/></svg>
<svg style="left:44.5px;top:551.56px" width="17" height="17" viewBox="0 0 17 17"><rect x="1" y="1.500" width="12.500" height="12.500" rx="2" fill="#f7d960" stroke="#c8a020" stroke-width="1"/><path d="M9.300 4.300q-2-0.600-2.300 1.500l-0.900 5.700M4.800 7.500h3.400" stroke="#8a5a10" stroke-width="1.200" fill="none"/></svg>
<svg style="left:29px;top:556px" width="9" height="9" viewBox="0 0 9 9"><rect x="0.500" y="0.500" width="8" height="8" fill="#fbfbfb" stroke="#9c9c9c" stroke-width="1"/><path d="M2.500 4.500h4M4.500 2.500v4" stroke="#2a4a9a" stroke-width="1"/></svg>
<svg style="left:44.5px;top:568.73px" width="17" height="17" viewBox="0 0 17 17"><rect x="1" y="1.500" width="12.500" height="12.500" rx="2" fill="#f7d960" stroke="#c8a020" stroke-width="1"/><path d="M9.300 4.300q-2-0.600-2.300 1.500l-0.900 5.700M4.800 7.500h3.400" stroke="#8a5a10" stroke-width="1.200" fill="none"/></svg>
<svg style="left:29px;top:573px" width="9" height="9" viewBox="0 0 9 9"><rect x="0.500" y="0.500" width="8" height="8" fill="#fbfbfb" stroke="#9c9c9c" stroke-width="1"/><path d="M2.500 4.500h4M4.500 2.500v4" stroke="#2a4a9a" stroke-width="1"/></svg>
<svg style="left:44.5px;top:585.9px" width="17" height="17" viewBox="0 0 17 17"><rect x="1" y="1.500" width="12.500" height="12.500" rx="2" fill="#f7d960" stroke="#c8a020" stroke-width="1"/><path d="M9.300 4.300q-2-0.600-2.300 1.500l-0.900 5.700M4.800 7.500h3.400" stroke="#8a5a10" stroke-width="1.200" fill="none"/></svg>
<svg style="left:29px;top:590px" width="9" height="9" viewBox="0 0 9 9"><rect x="0.500" y="0.500" width="8" height="8" fill="#fbfbfb" stroke="#9c9c9c" stroke-width="1"/><path d="M2.500 4.500h4M4.500 2.500v4" stroke="#2a4a9a" stroke-width="1"/></svg>
<svg style="left:44.5px;top:603.0699999999999px" width="17" height="17" viewBox="0 0 17 17"><rect x="1" y="1.500" width="12.500" height="12.500" rx="2" fill="#f7d960" stroke="#c8a020" stroke-width="1"/><path d="M9.300 4.300q-2-0.600-2.300 1.500l-0.900 5.700M4.800 7.500h3.400" stroke="#8a5a10" stroke-width="1.200" fill="none"/><path d="M11.500 9.500l3 3-3 3-3-3z" fill="#f0e0a0" stroke="#8a6a20" stroke-width="0.900"/></svg>
<svg style="left:29px;top:607px" width="9" height="9" viewBox="0 0 9 9"><rect x="0.500" y="0.500" width="8" height="8" fill="#fbfbfb" stroke="#9c9c9c" stroke-width="1"/><path d="M2.500 4.500h4M4.500 2.500v4" stroke="#2a4a9a" stroke-width="1"/></svg>
<svg style="left:44.5px;top:620.24px" width="17" height="17" viewBox="0 0 17 17"><rect x="1" y="1.500" width="12.500" height="12.500" rx="2" fill="#f7d960" stroke="#c8a020" stroke-width="1"/><path d="M9.300 4.300q-2-0.600-2.300 1.500l-0.900 5.700M4.800 7.500h3.400" stroke="#8a5a10" stroke-width="1.200" fill="none"/><path d="M11.500 9.500l3 3-3 3-3-3z" fill="#f0e0a0" stroke="#8a6a20" stroke-width="0.900"/></svg>
<svg style="left:44.5px;top:637.4100000000001px" width="17" height="17" viewBox="0 0 17 17"><rect x="1" y="1.500" width="12.500" height="12.500" rx="2" fill="#f7d960" stroke="#c8a020" stroke-width="1"/><path d="M9.300 4.300q-2-0.600-2.300 1.500l-0.900 5.700M4.800 7.500h3.400" stroke="#8a5a10" stroke-width="1.200" fill="none"/><path d="M11.500 9.500l3 3-3 3-3-3z" fill="#f0e0a0" stroke="#8a6a20" stroke-width="0.900"/></svg>
<svg style="left:44.5px;top:654.58px" width="17" height="17" viewBox="0 0 17 17"><rect x="1" y="1.500" width="12.500" height="12.500" rx="2" fill="#f7d960" stroke="#c8a020" stroke-width="1"/><path d="M9.300 4.300q-2-0.600-2.300 1.500l-0.900 5.700M4.800 7.500h3.400" stroke="#8a5a10" stroke-width="1.200" fill="none"/><path d="M11.500 9.500l3 3-3 3-3-3z" fill="#f0e0a0" stroke="#8a6a20" stroke-width="0.900"/></svg>
<svg style="left:14.5px;top:722.5px" width="12" height="14" viewBox="0 0 12 14"><path d="M1 0.500h6l3 3v9.500h-9z" fill="#fff" stroke="#7a7a7a" stroke-width="0.900"/><circle cx="8.200" cy="10.500" r="2.800" fill="#3a8ae0" stroke="#1c5cb0" stroke-width="0.600"/></svg>
<svg style="left:14px;top:742px" width="12" height="12" viewBox="0 0 12 12"><rect x="0.500" y="0.500" width="11" height="11" fill="#f6f6f6" stroke="#707070" stroke-width="1"/><path d="M6 2.200l3.300 3.600h-2v3.500h-2.600v-3.500h-2z" fill="#28b028" stroke="#107010" stroke-width="0.600"/></svg>
<div class="r" style="left:1365px;top:0px;width:4px;height:691px;background:#fdfdfd;"></div>
<div class="r" style="left:1365px;top:741px;width:4px;height:17px;background:#fdfdfd;"></div>
</body></html>
